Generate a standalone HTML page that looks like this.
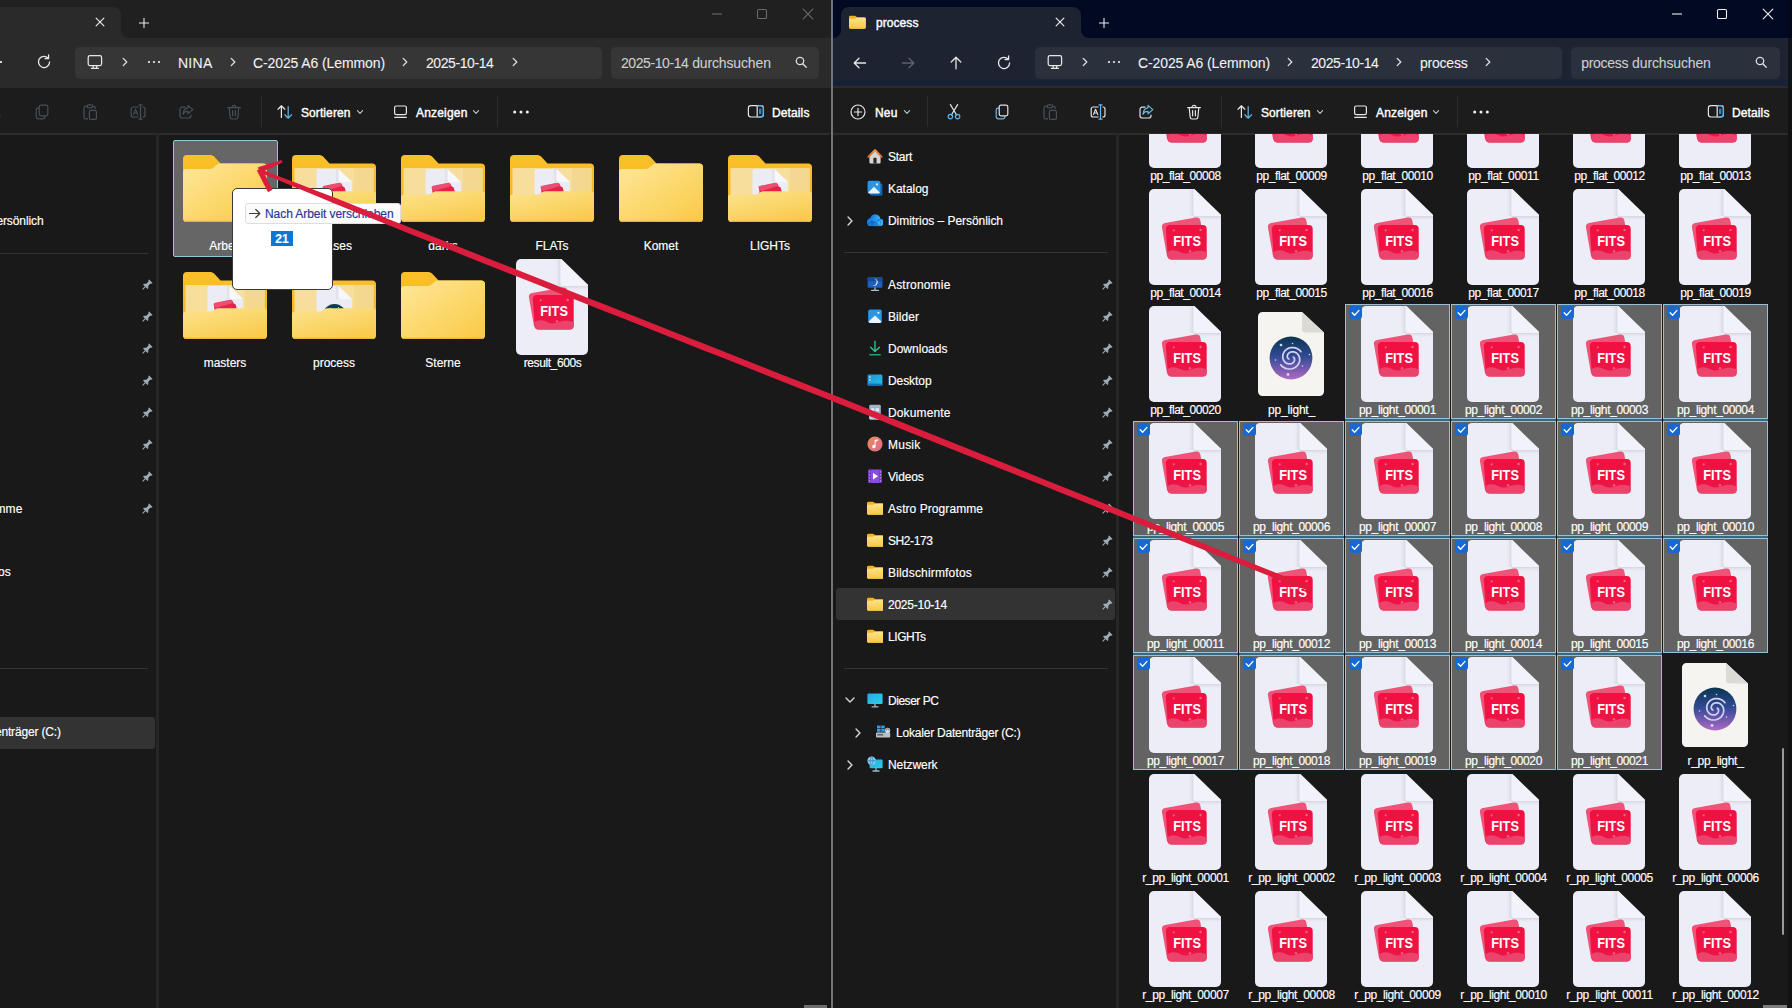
<!DOCTYPE html>
<html lang="de"><head><meta charset="utf-8"><title>Explorer</title>
<style>
html,body{margin:0;padding:0;background:#191919;}
body{width:1792px;height:1008px;position:relative;overflow:hidden;font-family:"Liberation Sans",sans-serif;}
.b{position:absolute;display:block;}
.t{position:absolute;white-space:nowrap;line-height:1;display:block;-webkit-text-stroke:0.16px currentColor;}
</style></head><body>
<svg class="b" width="0" height="0" style="left:0;top:0"><defs>
<linearGradient id="fsl" x1="0" y1="0" x2="1" y2="0"><stop offset="0" stop-color="#ecedf6" stop-opacity="0"/><stop offset="1" stop-color="#d4d5e0"/></linearGradient>
<linearGradient id="fsb" x1="0" y1="0" x2="0" y2="1"><stop offset="0" stop-color="#d4d5e0"/><stop offset="1" stop-color="#ecedf6" stop-opacity="0"/></linearGradient>
<linearGradient id="fcard" x1="0" y1="0" x2="0" y2="1"><stop offset="0" stop-color="#f21040"/><stop offset="1" stop-color="#ea1646"/></linearGradient>
<linearGradient id="sir" x1="0" y1="0" x2="0" y2="1"><stop offset="0" stop-color="#0b3550"/><stop offset="0.45" stop-color="#2f4a92"/><stop offset="0.78" stop-color="#7a5cb0"/><stop offset="1" stop-color="#b06bc4"/></linearGradient>
<linearGradient id="fold_back" x1="0" y1="0" x2="0" y2="1"><stop offset="0" stop-color="#fac02a"/><stop offset="1" stop-color="#f3b21c"/></linearGradient>
<linearGradient id="fold_front" x1="0" y1="0" x2="1" y2="1"><stop offset="0" stop-color="#fee79c"/><stop offset="0.5" stop-color="#fcd96e"/><stop offset="1" stop-color="#f9c945"/></linearGradient>
<linearGradient id="fold_flap" x1="0" y1="0" x2="0.6" y2="1"><stop offset="0" stop-color="#fde38e"/><stop offset="1" stop-color="#f9cc50"/></linearGradient>
<linearGradient id="sfold" x1="0" y1="0" x2="0" y2="1"><stop offset="0" stop-color="#ffe48a"/><stop offset="1" stop-color="#f8c648"/></linearGradient>
</defs></svg>
<div class="b" style="left:0px;top:0px;width:832px;height:38px;background:#202020;"></div>
<div class="b" style="left:0px;top:38px;width:832px;height:50px;background:#2a2a2a;"></div>
<div class="b" style="left:0px;top:88px;width:832px;height:45.5px;background:#1c1c1c;"></div>
<div class="b" style="left:0px;top:133.3px;width:832px;height:1.5px;background:#2c2c2c;"></div>
<div class="b" style="left:-10px;top:7px;width:131px;height:32px;background:#2a2a2a;border-radius:8px 8px 0 0;"></div>
<svg class="b" style="left:121px;top:30px;" width="8" height="8" viewBox="0 0 8 8"><path d="M0 8 H8 A8 8 0 0 1 0 0 z" fill="#2a2a2a"/></svg>
<svg class="b" style="left:91.5px;top:14px;" width="16" height="16" viewBox="0 0 16 16"><path d="M4.1 4.1 L11.9 11.9 M11.9 4.1 L4.1 11.9" stroke="#e9e9e9" stroke-width="1.2" stroke-linecap="round"/></svg>
<svg class="b" style="left:135.5px;top:15px;" width="16" height="16" viewBox="0 0 16 16"><path d="M3.4 8 H12.6 M8 3.4 V12.6" stroke="#e9e9e9" stroke-width="1.1" stroke-linecap="round"/></svg>
<svg class="b" style="left:711px;top:13px;" width="12" height="2" viewBox="0 0 12 2"><path d="M1 1 H11" stroke="#6a6a6a" stroke-width="1.1"/></svg>
<svg class="b" style="left:756px;top:8px;" width="12" height="12" viewBox="0 0 12 12"><rect x="1.5" y="1.5" width="9" height="9" rx="1.3" fill="none" stroke="#6a6a6a" stroke-width="1.1"/></svg>
<svg class="b" style="left:802px;top:8px;" width="12" height="12" viewBox="0 0 12 12"><path d="M1.2 1.2 L10.8 10.8 M10.8 1.2 L1.2 10.8" stroke="#6a6a6a" stroke-width="1.1" stroke-linecap="round"/></svg>
<div class="b" style="left:-6px;top:61.2px;width:8px;height:1.4px;background:#d8d8d8;"></div>
<svg class="b" style="left:35px;top:53px;" width="18" height="18" viewBox="0 0 18 18"><path d="M13.2 5.2 A5.6 5.6 0 1 0 14.6 9" fill="none" stroke="#e6e6e6" stroke-width="1.3" stroke-linecap="round"/><path d="M13.6 2 V5.6 H10" fill="none" stroke="#e6e6e6" stroke-width="1.3" stroke-linecap="round" stroke-linejoin="round"/></svg>
<div class="b" style="left:74.5px;top:46.5px;width:527.5px;height:32px;background:#363636;border-radius:5px;"></div>
<svg class="b" style="left:86px;top:52.6px;" width="18" height="18" viewBox="0 0 18 18"><rect x="2.2" y="2.6" width="13.4" height="10" rx="1.8" fill="none" stroke="#e6e6e6" stroke-width="1.25"/><path d="M5.4 15.4 H12.4 M7.2 12.8 V15.2 M10.6 12.8 V15.2" stroke="#e6e6e6" stroke-width="1.25" stroke-linecap="round" fill="none"/></svg>
<svg class="b" style="left:119px;top:54px;" width="12" height="16" viewBox="0 0 12 16"><path d="M4.2 4.4 L7.8 8 L4.2 11.6" fill="none" stroke="#e0e0e0" stroke-width="1.3" stroke-linecap="round" stroke-linejoin="round"/></svg>
<svg class="b" style="left:144px;top:58px;" width="20" height="8" viewBox="0 0 20 8"><circle cx="5" cy="4" r="1.1" fill="#efefef"/><circle cx="10" cy="4" r="1.1" fill="#efefef"/><circle cx="15" cy="4" r="1.1" fill="#efefef"/></svg>
<span class="t" style="left:178.00px;top:56.15px;font-size:14px;color:#f2f2f2;letter-spacing:0.263px;-webkit-text-stroke:0.08px currentColor;">NINA</span>
<svg class="b" style="left:226.5px;top:54px;" width="12" height="16" viewBox="0 0 12 16"><path d="M4.2 4.4 L7.8 8 L4.2 11.6" fill="none" stroke="#e0e0e0" stroke-width="1.3" stroke-linecap="round" stroke-linejoin="round"/></svg>
<span class="t" style="left:253.00px;top:56.15px;font-size:14px;color:#f2f2f2;letter-spacing:-0.103px;-webkit-text-stroke:0.08px currentColor;">C-2025 A6 (Lemmon)</span>
<svg class="b" style="left:399px;top:54px;" width="12" height="16" viewBox="0 0 12 16"><path d="M4.2 4.4 L7.8 8 L4.2 11.6" fill="none" stroke="#e0e0e0" stroke-width="1.3" stroke-linecap="round" stroke-linejoin="round"/></svg>
<span class="t" style="left:426.00px;top:56.15px;font-size:14px;color:#f2f2f2;letter-spacing:-0.412px;-webkit-text-stroke:0.08px currentColor;">2025-10-14</span>
<svg class="b" style="left:509px;top:54px;" width="12" height="16" viewBox="0 0 12 16"><path d="M4.2 4.4 L7.8 8 L4.2 11.6" fill="none" stroke="#e0e0e0" stroke-width="1.3" stroke-linecap="round" stroke-linejoin="round"/></svg>
<div class="b" style="left:610.5px;top:46.5px;width:208px;height:32px;background:#363636;border-radius:5px;"></div>
<span class="t" style="left:621.00px;top:56.15px;font-size:14px;color:#cfcfcf;letter-spacing:-0.412px;-webkit-text-stroke:0.08px currentColor;">2025-10-14</span>
<span class="t" style="left:692.20px;top:56.15px;font-size:14px;color:#cfcfcf;letter-spacing:-0.143px;-webkit-text-stroke:0.08px currentColor;">durchsuchen</span>
<svg class="b" style="left:794.3px;top:55.3px;" width="15" height="15" viewBox="0 0 15 15"><circle cx="6" cy="6" r="3.7" fill="none" stroke="#dedede" stroke-width="1.3"/><path d="M8.8 8.8 L12.2 12.2" stroke="#dedede" stroke-width="1.4" stroke-linecap="round"/></svg>
<svg class="b" style="left:-15.5px;top:103px;" width="18" height="18" viewBox="0 0 18 18"><path d="M5.4 1.6 L11.6 12 M12.6 1.6 L6.4 12" stroke="#45505a" stroke-width="1.2" stroke-linecap="round"/><circle cx="5.4" cy="13.6" r="2.2" fill="none" stroke="#45505a" stroke-width="1.2"/><circle cx="12.6" cy="13.6" r="2.2" fill="none" stroke="#45505a" stroke-width="1.2"/></svg>
<svg class="b" style="left:32.5px;top:103px;" width="18" height="18" viewBox="0 0 18 18"><path d="M6 5.2 H5 a1.8 1.8 0 0 0 -1.8 1.8 V13.6 a2.2 2.2 0 0 0 2.2 2.2 H10 a1.8 1.8 0 0 0 1.8 -1.8 V13" fill="none" stroke="#45505a" stroke-width="1.2"/><rect x="6.2" y="2.2" width="8.6" height="10.6" rx="1.8" fill="none" stroke="#45505a" stroke-width="1.2"/></svg>
<svg class="b" style="left:80.5px;top:103px;" width="18" height="18" viewBox="0 0 18 18"><path d="M6.4 3.4 H4.6 a1.6 1.6 0 0 0 -1.6 1.6 V14.2 a1.6 1.6 0 0 0 1.6 1.6 H7" fill="none" stroke="#45505a" stroke-width="1.2"/><path d="M11.6 3.4 H12.6 a1.6 1.6 0 0 1 1.6 1.6 V6" fill="none" stroke="#45505a" stroke-width="1.2"/><rect x="6.2" y="1.8" width="5.4" height="3" rx="1.2" fill="none" stroke="#45505a" stroke-width="1.2"/><rect x="8.4" y="7.4" width="7" height="9" rx="1.5" fill="none" stroke="#45505a" stroke-width="1.2"/></svg>
<svg class="b" style="left:129px;top:103px;" width="18" height="18" viewBox="0 0 18 18"><path d="M9.6 4 H4.2 a2 2 0 0 0 -2 2 V12 a2 2 0 0 0 2 2 H9.6 M13.4 4 H14 a2 2 0 0 1 2 2 V12 a2 2 0 0 1 -2 2 H13.4" fill="none" stroke="#45505a" stroke-width="1.2"/><path d="M11.5 1.8 V16.2 M10 1.8 H13 M10 16.2 H13" stroke="#45505a" stroke-width="1.2" stroke-linecap="round"/><path d="M4.4 11.6 L6.6 6.2 L8.8 11.6 M5.2 10 H8" fill="none" stroke="#45505a" stroke-width="1.1" stroke-linejoin="round" stroke-linecap="round"/></svg>
<svg class="b" style="left:177px;top:103px;" width="18" height="18" viewBox="0 0 18 18"><path d="M8 4.2 H5.2 a2.2 2.2 0 0 0 -2.2 2.2 V12.8 a2.2 2.2 0 0 0 2.2 2.2 H11.8 a2.2 2.2 0 0 0 2.2 -2.2 V12" fill="none" stroke="#45505a" stroke-width="1.2" stroke-linecap="round"/><path d="M11 2.4 L15.8 6.6 L11 10.8 V8.4 C8.6 8.2 7 9.2 6 11.2 C6.2 7.6 8 5.2 11 4.8 z" fill="none" stroke="#45505a" stroke-width="1.2" stroke-linejoin="round"/></svg>
<svg class="b" style="left:225px;top:103px;" width="18" height="18" viewBox="0 0 18 18"><path d="M2.6 4.6 H15.4 M7 4.4 a2 2 0 0 1 4 0" fill="none" stroke="#45505a" stroke-width="1.2" stroke-linecap="round"/><path d="M4.2 4.8 L5.2 14.4 a1.8 1.8 0 0 0 1.8 1.6 H11 a1.8 1.8 0 0 0 1.8 -1.6 L13.8 4.8" fill="none" stroke="#45505a" stroke-width="1.2"/><path d="M7.6 7.6 V12.8 M10.4 7.6 V12.8" stroke="#45505a" stroke-width="1.2" stroke-linecap="round"/></svg>
<div class="b" style="left:260.5px;top:96px;width:1px;height:31px;background:#2d2d2d;"></div>
<svg class="b" style="left:276px;top:103px;" width="18" height="18" viewBox="0 0 18 18"><path d="M5.4 14.4 V3 M2 6.2 L5.4 2.8 L8.8 6.2" fill="none" stroke="#e6e6e6" stroke-width="1.25" stroke-linecap="round" stroke-linejoin="round"/><path d="M12.2 3.6 V15 M8.8 11.8 L12.2 15.2 L15.6 11.8" fill="none" stroke="#5fb3e6" stroke-width="1.25" stroke-linecap="round" stroke-linejoin="round"/></svg>
<span class="t" style="left:301.00px;top:106.74px;font-size:12px;color:#fff;letter-spacing:0.090px;-webkit-text-stroke:0.4px #fff;">Sortieren</span>
<svg class="b" style="left:352px;top:106px;" width="16" height="12" viewBox="0 0 16 12"><path d="M5.4 4.7 L8 7.3 L10.6 4.7" fill="none" stroke="#c8c8c8" stroke-width="1.1" stroke-linecap="round" stroke-linejoin="round"/></svg>
<svg class="b" style="left:392px;top:103px;" width="17" height="18" viewBox="0 0 17 18"><rect x="2.6" y="3" width="11.8" height="8.6" rx="1.6" fill="none" stroke="#e6e6e6" stroke-width="1.2"/><path d="M2.8 14.4 H14.2" stroke="#e6e6e6" stroke-width="1.3" stroke-linecap="round"/></svg>
<span class="t" style="left:416.00px;top:106.74px;font-size:12px;color:#fff;letter-spacing:0.182px;-webkit-text-stroke:0.4px #fff;">Anzeigen</span>
<svg class="b" style="left:468px;top:106px;" width="16" height="12" viewBox="0 0 16 12"><path d="M5.4 4.7 L8 7.3 L10.6 4.7" fill="none" stroke="#c8c8c8" stroke-width="1.1" stroke-linecap="round" stroke-linejoin="round"/></svg>
<div class="b" style="left:497px;top:96px;width:1px;height:31px;background:#2d2d2d;"></div>
<svg class="b" style="left:510.8px;top:108px;" width="20" height="8" viewBox="0 0 20 8"><circle cx="3.7" cy="4" r="1.5" fill="#f0f0f0"/><circle cx="10" cy="4" r="1.5" fill="#f0f0f0"/><circle cx="16.3" cy="4" r="1.5" fill="#f0f0f0"/></svg>
<svg class="b" style="left:747px;top:102.6px;" width="18" height="17" viewBox="0 0 18 17"><rect x="1.4" y="2.6" width="15" height="11.4" rx="2.4" fill="none" stroke="#e6e6e6" stroke-width="1.2"/><path d="M10.2 2.6 V14" stroke="#e6e6e6" stroke-width="1.2"/><path d="M10.2 2.6 H14 a2.4 2.4 0 0 1 2.4 2.4 V11.6 a2.4 2.4 0 0 1 -2.4 2.4 H10.2" fill="none" stroke="#5fb3e6" stroke-width="1.2"/><rect x="12" y="5.4" width="2.4" height="5.8" rx="0.8" fill="#2f7fb8"/></svg>
<span class="t" style="left:772.00px;top:106.74px;font-size:12px;color:#fff;letter-spacing:0.117px;-webkit-text-stroke:0.4px #fff;">Details</span>
<div class="b" style="left:156px;top:134px;width:3px;height:874px;background:#262626;"></div>
<span class="t" style="left:-11.50px;top:214.64px;font-size:12px;color:#fff;letter-spacing:-0.103px;">Persönlich</span>
<div class="b" style="left:0px;top:252.5px;width:147.5px;height:1px;background:#333;"></div>
<svg class="b" style="left:140.5px;top:279px;" width="12" height="12" viewBox="0 0 12 12"><g transform="rotate(45 6 6)"><path d="M3.6 0.6 H8.4 V1.8 L7.4 2.4 V5.6 L9.2 7.4 V8.4 H2.8 V7.4 L4.6 5.6 V2.4 L3.6 1.8 z" fill="#a4acb8"/><path d="M6 8.4 V12.2" stroke="#a4acb8" stroke-width="1.1"/></g></svg>
<svg class="b" style="left:140.5px;top:311px;" width="12" height="12" viewBox="0 0 12 12"><g transform="rotate(45 6 6)"><path d="M3.6 0.6 H8.4 V1.8 L7.4 2.4 V5.6 L9.2 7.4 V8.4 H2.8 V7.4 L4.6 5.6 V2.4 L3.6 1.8 z" fill="#a4acb8"/><path d="M6 8.4 V12.2" stroke="#a4acb8" stroke-width="1.1"/></g></svg>
<svg class="b" style="left:140.5px;top:343px;" width="12" height="12" viewBox="0 0 12 12"><g transform="rotate(45 6 6)"><path d="M3.6 0.6 H8.4 V1.8 L7.4 2.4 V5.6 L9.2 7.4 V8.4 H2.8 V7.4 L4.6 5.6 V2.4 L3.6 1.8 z" fill="#a4acb8"/><path d="M6 8.4 V12.2" stroke="#a4acb8" stroke-width="1.1"/></g></svg>
<svg class="b" style="left:140.5px;top:375px;" width="12" height="12" viewBox="0 0 12 12"><g transform="rotate(45 6 6)"><path d="M3.6 0.6 H8.4 V1.8 L7.4 2.4 V5.6 L9.2 7.4 V8.4 H2.8 V7.4 L4.6 5.6 V2.4 L3.6 1.8 z" fill="#a4acb8"/><path d="M6 8.4 V12.2" stroke="#a4acb8" stroke-width="1.1"/></g></svg>
<svg class="b" style="left:140.5px;top:407px;" width="12" height="12" viewBox="0 0 12 12"><g transform="rotate(45 6 6)"><path d="M3.6 0.6 H8.4 V1.8 L7.4 2.4 V5.6 L9.2 7.4 V8.4 H2.8 V7.4 L4.6 5.6 V2.4 L3.6 1.8 z" fill="#a4acb8"/><path d="M6 8.4 V12.2" stroke="#a4acb8" stroke-width="1.1"/></g></svg>
<svg class="b" style="left:140.5px;top:439px;" width="12" height="12" viewBox="0 0 12 12"><g transform="rotate(45 6 6)"><path d="M3.6 0.6 H8.4 V1.8 L7.4 2.4 V5.6 L9.2 7.4 V8.4 H2.8 V7.4 L4.6 5.6 V2.4 L3.6 1.8 z" fill="#a4acb8"/><path d="M6 8.4 V12.2" stroke="#a4acb8" stroke-width="1.1"/></g></svg>
<svg class="b" style="left:140.5px;top:471px;" width="12" height="12" viewBox="0 0 12 12"><g transform="rotate(45 6 6)"><path d="M3.6 0.6 H8.4 V1.8 L7.4 2.4 V5.6 L9.2 7.4 V8.4 H2.8 V7.4 L4.6 5.6 V2.4 L3.6 1.8 z" fill="#a4acb8"/><path d="M6 8.4 V12.2" stroke="#a4acb8" stroke-width="1.1"/></g></svg>
<svg class="b" style="left:140.5px;top:503px;" width="12" height="12" viewBox="0 0 12 12"><g transform="rotate(45 6 6)"><path d="M3.6 0.6 H8.4 V1.8 L7.4 2.4 V5.6 L9.2 7.4 V8.4 H2.8 V7.4 L4.6 5.6 V2.4 L3.6 1.8 z" fill="#a4acb8"/><path d="M6 8.4 V12.2" stroke="#a4acb8" stroke-width="1.1"/></g></svg>
<span class="t" style="left:-72.60px;top:502.54px;font-size:12px;color:#fff;letter-spacing:0.065px;">Astro Programme</span>
<span class="t" style="left:-73.10px;top:566.44px;font-size:12px;color:#fff;letter-spacing:0.176px;">Bildschirmfotos</span>
<div class="b" style="left:0px;top:668px;width:147.5px;height:1px;background:#333;"></div>
<div class="b" style="left:-5px;top:717px;width:160px;height:31.5px;background:#333333;border-radius:3px;"></div>
<span class="t" style="left:-64.70px;top:726.14px;font-size:12px;color:#fff;letter-spacing:-0.162px;">Lokaler Datenträger (C:)</span>
<div class="b" style="left:173px;top:140px;width:105px;height:116.5px;background:#666666;box-sizing:border-box;border:1px solid #8fcbd9;border-radius:2px;"></div>
<svg class="b" style="left:183px;top:155px;" width="84" height="67" viewBox="0 0 84 67"><path d="M4 0 H27.5 a5 5 0 0 1 3.6 1.6 L37.5 8.6 H80 a4 4 0 0 1 4 4 V63 a4 4 0 0 1 -4 4 H4 a4 4 0 0 1 -4 -4 V4 a4 4 0 0 1 4 -4 z" fill="url(#fold_back)"/><path d="M0 17 a3 3 0 0 1 3 -3 H27 a5 5 0 0 0 3.5 -1.5 L33.5 10 a5 5 0 0 1 3.5 -1.4 H80 a4 4 0 0 1 4 4 V63 a4 4 0 0 1 -4 4 H4 a4 4 0 0 1 -4 -4 z" fill="url(#fold_front)"/><path d="M1.5 66.3 H82.5" stroke="#e9b436" stroke-width="1.2" fill="none"/></svg>
<span class="t" style="left:209.33px;top:240.24px;font-size:12px;color:#fff;">Arbeit</span>
<svg class="b" style="left:292px;top:155px;" width="84" height="67" viewBox="0 0 84 67"><path d="M4 0 H27.5 a5 5 0 0 1 3.6 1.6 L37.5 8.6 H80 a4 4 0 0 1 4 4 V63 a4 4 0 0 1 -4 4 H4 a4 4 0 0 1 -4 -4 V4 a4 4 0 0 1 4 -4 z" fill="url(#fold_back)"/><rect x="2.5" y="13" width="79" height="28" fill="#f7de9c"/><rect x="62" y="13" width="19.5" height="28" fill="#f4d890"/><path d="M26 14 H46.5 L60 27 V41 H24.5 V15.5 a1.5 1.5 0 0 1 1.5 -1.5 z" fill="#ececf5"/><path d="M46.5 14 L60 27 H49 a2.5 2.5 0 0 1 -2.5 -2.5 z" fill="#f7f7fc"/><path d="M44 14 h2.5 v13 h-2.5z" fill="#dcdce6" opacity="0.6"/><path d="M31 33.5 a2 2 0 0 1 1.6 -2.2 L47.5 28 a2 2 0 0 1 2.2 1.2 l1.2 2.6 a2 2 0 0 1 2 1.4 l1.2 4.8 H31.6 z" fill="#e8214b"/><path d="M30.5 33 a2 2 0 0 1 1.6 -2.2 L47 27.8 a2 2 0 0 1 2.2 1.2 l0.8 2 L33 36 z" fill="#ee4d72"/><path d="M0 42.5 a3 3 0 0 1 3 -3 H27 a6 6 0 0 0 3.4 -1.1 L32.4 37.2 a5 5 0 0 1 3 -1 H81 a3 3 0 0 1 3 3 V63 a4 4 0 0 1 -4 4 H4 a4 4 0 0 1 -4 -4 z" fill="url(#fold_flap)"/><path d="M1.5 66.3 H82.5" stroke="#e9b436" stroke-width="1.2" fill="none"/></svg>
<span class="t" style="left:315.99px;top:240.24px;font-size:12px;color:#fff;">Biases</span>
<svg class="b" style="left:401px;top:155px;" width="84" height="67" viewBox="0 0 84 67"><path d="M4 0 H27.5 a5 5 0 0 1 3.6 1.6 L37.5 8.6 H80 a4 4 0 0 1 4 4 V63 a4 4 0 0 1 -4 4 H4 a4 4 0 0 1 -4 -4 V4 a4 4 0 0 1 4 -4 z" fill="url(#fold_back)"/><rect x="2.5" y="13" width="79" height="28" fill="#f7de9c"/><rect x="62" y="13" width="19.5" height="28" fill="#f4d890"/><path d="M26 14 H46.5 L60 27 V41 H24.5 V15.5 a1.5 1.5 0 0 1 1.5 -1.5 z" fill="#ececf5"/><path d="M46.5 14 L60 27 H49 a2.5 2.5 0 0 1 -2.5 -2.5 z" fill="#f7f7fc"/><path d="M44 14 h2.5 v13 h-2.5z" fill="#dcdce6" opacity="0.6"/><path d="M31 33.5 a2 2 0 0 1 1.6 -2.2 L47.5 28 a2 2 0 0 1 2.2 1.2 l1.2 2.6 a2 2 0 0 1 2 1.4 l1.2 4.8 H31.6 z" fill="#e8214b"/><path d="M30.5 33 a2 2 0 0 1 1.6 -2.2 L47 27.8 a2 2 0 0 1 2.2 1.2 l0.8 2 L33 36 z" fill="#ee4d72"/><path d="M0 42.5 a3 3 0 0 1 3 -3 H27 a6 6 0 0 0 3.4 -1.1 L32.4 37.2 a5 5 0 0 1 3 -1 H81 a3 3 0 0 1 3 3 V63 a4 4 0 0 1 -4 4 H4 a4 4 0 0 1 -4 -4 z" fill="url(#fold_flap)"/><path d="M1.5 66.3 H82.5" stroke="#e9b436" stroke-width="1.2" fill="none"/></svg>
<span class="t" style="left:428.33px;top:240.24px;font-size:12px;color:#fff;">darks</span>
<svg class="b" style="left:510px;top:155px;" width="84" height="67" viewBox="0 0 84 67"><path d="M4 0 H27.5 a5 5 0 0 1 3.6 1.6 L37.5 8.6 H80 a4 4 0 0 1 4 4 V63 a4 4 0 0 1 -4 4 H4 a4 4 0 0 1 -4 -4 V4 a4 4 0 0 1 4 -4 z" fill="url(#fold_back)"/><rect x="2.5" y="13" width="79" height="28" fill="#f7de9c"/><rect x="62" y="13" width="19.5" height="28" fill="#f4d890"/><path d="M26 14 H46.5 L60 27 V41 H24.5 V15.5 a1.5 1.5 0 0 1 1.5 -1.5 z" fill="#ececf5"/><path d="M46.5 14 L60 27 H49 a2.5 2.5 0 0 1 -2.5 -2.5 z" fill="#f7f7fc"/><path d="M44 14 h2.5 v13 h-2.5z" fill="#dcdce6" opacity="0.6"/><path d="M31 33.5 a2 2 0 0 1 1.6 -2.2 L47.5 28 a2 2 0 0 1 2.2 1.2 l1.2 2.6 a2 2 0 0 1 2 1.4 l1.2 4.8 H31.6 z" fill="#e8214b"/><path d="M30.5 33 a2 2 0 0 1 1.6 -2.2 L47 27.8 a2 2 0 0 1 2.2 1.2 l0.8 2 L33 36 z" fill="#ee4d72"/><path d="M0 42.5 a3 3 0 0 1 3 -3 H27 a6 6 0 0 0 3.4 -1.1 L32.4 37.2 a5 5 0 0 1 3 -1 H81 a3 3 0 0 1 3 3 V63 a4 4 0 0 1 -4 4 H4 a4 4 0 0 1 -4 -4 z" fill="url(#fold_flap)"/><path d="M1.5 66.3 H82.5" stroke="#e9b436" stroke-width="1.2" fill="none"/></svg>
<span class="t" style="left:535.44px;top:240.24px;font-size:12px;color:#fff;">FLATs</span>
<svg class="b" style="left:619px;top:155px;" width="84" height="67" viewBox="0 0 84 67"><path d="M4 0 H27.5 a5 5 0 0 1 3.6 1.6 L37.5 8.6 H80 a4 4 0 0 1 4 4 V63 a4 4 0 0 1 -4 4 H4 a4 4 0 0 1 -4 -4 V4 a4 4 0 0 1 4 -4 z" fill="url(#fold_back)"/><path d="M0 17 a3 3 0 0 1 3 -3 H27 a5 5 0 0 0 3.5 -1.5 L33.5 10 a5 5 0 0 1 3.5 -1.4 H80 a4 4 0 0 1 4 4 V63 a4 4 0 0 1 -4 4 H4 a4 4 0 0 1 -4 -4 z" fill="url(#fold_front)"/><path d="M1.5 66.3 H82.5" stroke="#e9b436" stroke-width="1.2" fill="none"/></svg>
<span class="t" style="left:643.66px;top:240.24px;font-size:12px;color:#fff;">Komet</span>
<svg class="b" style="left:728px;top:155px;" width="84" height="67" viewBox="0 0 84 67"><path d="M4 0 H27.5 a5 5 0 0 1 3.6 1.6 L37.5 8.6 H80 a4 4 0 0 1 4 4 V63 a4 4 0 0 1 -4 4 H4 a4 4 0 0 1 -4 -4 V4 a4 4 0 0 1 4 -4 z" fill="url(#fold_back)"/><rect x="2.5" y="13" width="79" height="28" fill="#f7de9c"/><rect x="62" y="13" width="19.5" height="28" fill="#f4d890"/><path d="M26 14 H46.5 L60 27 V41 H24.5 V15.5 a1.5 1.5 0 0 1 1.5 -1.5 z" fill="#ececf5"/><path d="M46.5 14 L60 27 H49 a2.5 2.5 0 0 1 -2.5 -2.5 z" fill="#f7f7fc"/><path d="M44 14 h2.5 v13 h-2.5z" fill="#dcdce6" opacity="0.6"/><path d="M31 33.5 a2 2 0 0 1 1.6 -2.2 L47.5 28 a2 2 0 0 1 2.2 1.2 l1.2 2.6 a2 2 0 0 1 2 1.4 l1.2 4.8 H31.6 z" fill="#e8214b"/><path d="M30.5 33 a2 2 0 0 1 1.6 -2.2 L47 27.8 a2 2 0 0 1 2.2 1.2 l0.8 2 L33 36 z" fill="#ee4d72"/><path d="M0 42.5 a3 3 0 0 1 3 -3 H27 a6 6 0 0 0 3.4 -1.1 L32.4 37.2 a5 5 0 0 1 3 -1 H81 a3 3 0 0 1 3 3 V63 a4 4 0 0 1 -4 4 H4 a4 4 0 0 1 -4 -4 z" fill="url(#fold_flap)"/><path d="M1.5 66.3 H82.5" stroke="#e9b436" stroke-width="1.2" fill="none"/></svg>
<span class="t" style="left:750.00px;top:240.24px;font-size:12px;color:#fff;">LIGHTs</span>
<svg class="b" style="left:183px;top:272px;" width="84" height="67" viewBox="0 0 84 67"><path d="M4 0 H27.5 a5 5 0 0 1 3.6 1.6 L37.5 8.6 H80 a4 4 0 0 1 4 4 V63 a4 4 0 0 1 -4 4 H4 a4 4 0 0 1 -4 -4 V4 a4 4 0 0 1 4 -4 z" fill="url(#fold_back)"/><rect x="2.5" y="13" width="79" height="28" fill="#f7de9c"/><rect x="62" y="13" width="19.5" height="28" fill="#f4d890"/><path d="M26 14 H46.5 L60 27 V41 H24.5 V15.5 a1.5 1.5 0 0 1 1.5 -1.5 z" fill="#ececf5"/><path d="M46.5 14 L60 27 H49 a2.5 2.5 0 0 1 -2.5 -2.5 z" fill="#f7f7fc"/><path d="M44 14 h2.5 v13 h-2.5z" fill="#dcdce6" opacity="0.6"/><path d="M31 33.5 a2 2 0 0 1 1.6 -2.2 L47.5 28 a2 2 0 0 1 2.2 1.2 l1.2 2.6 a2 2 0 0 1 2 1.4 l1.2 4.8 H31.6 z" fill="#e8214b"/><path d="M30.5 33 a2 2 0 0 1 1.6 -2.2 L47 27.8 a2 2 0 0 1 2.2 1.2 l0.8 2 L33 36 z" fill="#ee4d72"/><path d="M0 42.5 a3 3 0 0 1 3 -3 H27 a6 6 0 0 0 3.4 -1.1 L32.4 37.2 a5 5 0 0 1 3 -1 H81 a3 3 0 0 1 3 3 V63 a4 4 0 0 1 -4 4 H4 a4 4 0 0 1 -4 -4 z" fill="url(#fold_flap)"/><path d="M1.5 66.3 H82.5" stroke="#e9b436" stroke-width="1.2" fill="none"/></svg>
<span class="t" style="left:203.66px;top:357.24px;font-size:12px;color:#fff;">masters</span>
<svg class="b" style="left:292px;top:272px;" width="84" height="67" viewBox="0 0 84 67"><path d="M4 0 H27.5 a5 5 0 0 1 3.6 1.6 L37.5 8.6 H80 a4 4 0 0 1 4 4 V63 a4 4 0 0 1 -4 4 H4 a4 4 0 0 1 -4 -4 V4 a4 4 0 0 1 4 -4 z" fill="url(#fold_back)"/><rect x="2.5" y="13" width="79" height="28" fill="#f7de9c"/><rect x="62" y="13" width="19.5" height="28" fill="#f4d890"/><path d="M26 14 H46.5 L60 27 V41 H24.5 V15.5 a1.5 1.5 0 0 1 1.5 -1.5 z" fill="#ececf5"/><path d="M46.5 14 L60 27 H49 a2.5 2.5 0 0 1 -2.5 -2.5 z" fill="#f7f7fc"/><path d="M44 14 h2.5 v13 h-2.5z" fill="#dcdce6" opacity="0.6"/><circle cx="42.5" cy="43.5" r="11.5" fill="#0d3b55"/><circle cx="38.5" cy="36.5" r="0.8" fill="#cfd6fb"/><circle cx="46.5" cy="35.5" r="0.6" fill="#cfd6fb"/><path d="M0 42.5 a3 3 0 0 1 3 -3 H27 a6 6 0 0 0 3.4 -1.1 L32.4 37.2 a5 5 0 0 1 3 -1 H81 a3 3 0 0 1 3 3 V63 a4 4 0 0 1 -4 4 H4 a4 4 0 0 1 -4 -4 z" fill="url(#fold_flap)"/><path d="M1.5 66.3 H82.5" stroke="#e9b436" stroke-width="1.2" fill="none"/></svg>
<span class="t" style="left:312.99px;top:357.24px;font-size:12px;color:#fff;">process</span>
<svg class="b" style="left:401px;top:272px;" width="84" height="67" viewBox="0 0 84 67"><path d="M4 0 H27.5 a5 5 0 0 1 3.6 1.6 L37.5 8.6 H80 a4 4 0 0 1 4 4 V63 a4 4 0 0 1 -4 4 H4 a4 4 0 0 1 -4 -4 V4 a4 4 0 0 1 4 -4 z" fill="url(#fold_back)"/><path d="M0 17 a3 3 0 0 1 3 -3 H27 a5 5 0 0 0 3.5 -1.5 L33.5 10 a5 5 0 0 1 3.5 -1.4 H80 a4 4 0 0 1 4 4 V63 a4 4 0 0 1 -4 4 H4 a4 4 0 0 1 -4 -4 z" fill="url(#fold_front)"/><path d="M1.5 66.3 H82.5" stroke="#e9b436" stroke-width="1.2" fill="none"/></svg>
<span class="t" style="left:425.32px;top:357.24px;font-size:12px;color:#fff;">Sterne</span>
<svg class="b" style="left:516px;top:259.4px;" width="72" height="96" viewBox="0 0 72 96"><path d="M5 0 H44.6 L72 26.6 V91 a5 5 0 0 1 -5 5 H5 a5 5 0 0 1 -5 -5 V5 a5 5 0 0 1 5 -5 z" fill="#ecedf6"/><rect x="38.5" y="0" width="6" height="27" fill="url(#fsl)"/><rect x="44.5" y="27" width="27.5" height="5" fill="url(#fsb)"/><path d="M44.5 0 H45.5 L72 25.8 V27 H48.5 a4 4 0 0 1 -4 -4 z" fill="#f2f2fa"/><g transform="translate(0 0) scale(1)"><rect x="15.2" y="31" width="39" height="36" rx="4" fill="#ef5378" transform="rotate(-10 34.5 49.5)"/><path d="M20.7 36 H53.7 a4 4 0 0 1 4 4 V66.5 a4 4 0 0 1 -4 4 H22.7 a4 4 0 0 1 -4 -4 L16.8 40.1 a3.8 3.8 0 0 1 3.9 -4.1 z" fill="url(#fcard)"/><path d="M18.5 63 C23 60.5 27 61 32 63.6 C37 66 42 63 47 62 C51 61.3 54.5 62 57.7 63.5 V66.5 a4 4 0 0 1 -4 4 H22.7 a4 4 0 0 1 -4 -4 z" fill="#ec436c"/><circle cx="24.7" cy="41.3" r="1.1" fill="#f55f83"/><circle cx="51.6" cy="41" r="1.3" fill="#f55f83"/><circle cx="41" cy="62.3" r="1.2" fill="#f45c80"/><text x="38.1" y="57.2" font-family="Liberation Sans, sans-serif" font-weight="700" font-size="14.6" fill="#fff" text-anchor="middle" textLength="27.6" lengthAdjust="spacingAndGlyphs">FITS</text></g></svg>
<span class="t" style="left:523.75px;top:357.24px;font-size:12px;color:#fff;letter-spacing:-0.413px;">result_600s</span>
<div class="b" style="left:803.5px;top:1005px;width:23.5px;height:3px;background:#6e6e6e;"></div>
<div class="b" style="left:833px;top:0px;width:959px;height:38px;background:#020922;"></div>
<div class="b" style="left:833px;top:38px;width:959px;height:50px;background:#1d2330;"></div>
<div class="b" style="left:833px;top:88px;width:959px;height:45.5px;background:#1c1c1c;"></div>
<div class="b" style="left:833px;top:80px;width:959px;height:6px;background:#182036;"></div>
<div class="b" style="left:833px;top:86px;width:959px;height:2px;background:#2b2b2b;"></div>
<div class="b" style="left:833px;top:133.3px;width:959px;height:1.5px;background:#2c2c2c;"></div>
<div class="b" style="left:841px;top:7px;width:239.5px;height:32px;background:#1d2330;border-radius:8px 8px 0 0;"></div>
<svg class="b" style="left:833px;top:30px;" width="8" height="8" viewBox="0 0 8 8"><path d="M8 8 H0 A8 8 0 0 0 8 0 z" fill="#1d2330"/></svg>
<svg class="b" style="left:1080.5px;top:30px;" width="8" height="8" viewBox="0 0 8 8"><path d="M0 8 H8 A8 8 0 0 1 0 0 z" fill="#1d2330"/></svg>
<svg class="b" style="left:849.1px;top:15px;" width="16.8" height="14.5" viewBox="0 0 17.5 14.5"><path d="M1.5 0.5 H6.2 a1.5 1.5 0 0 1 1.1 0.5 L8.6 2.3 H16 a1.5 1.5 0 0 1 1.5 1.5 V12.5 a1.5 1.5 0 0 1 -1.5 1.5 H1.5 a1.5 1.5 0 0 1 -1.5 -1.5 V2 a1.5 1.5 0 0 1 1.5 -1.5 z" fill="#f2b11f"/><path d="M0 4.6 a1 1 0 0 1 1 -1 H6 a1.6 1.6 0 0 0 1.1 -0.45 L7.8 2.6 a1.2 1.2 0 0 1 0.9 -0.3 H16 a1.5 1.5 0 0 1 1.5 1.5 V12.5 a1.5 1.5 0 0 1 -1.5 1.5 H1.5 a1.5 1.5 0 0 1 -1.5 -1.5 z" fill="url(#sfold)"/></svg>
<span class="t" style="left:876.00px;top:17.44px;font-size:12px;color:#fff;letter-spacing:0.069px;-webkit-text-stroke:0.4px #fff;">process</span>
<svg class="b" style="left:1051.5px;top:14px;" width="16" height="16" viewBox="0 0 16 16"><path d="M4.1 4.1 L11.9 11.9 M11.9 4.1 L4.1 11.9" stroke="#e9e9e9" stroke-width="1.2" stroke-linecap="round"/></svg>
<svg class="b" style="left:1095.5px;top:15px;" width="16" height="16" viewBox="0 0 16 16"><path d="M3.4 8 H12.6 M8 3.4 V12.6" stroke="#e9e9e9" stroke-width="1.1" stroke-linecap="round"/></svg>
<svg class="b" style="left:1671px;top:13px;" width="12" height="2" viewBox="0 0 12 2"><path d="M1 1 H11" stroke="#f0f0f0" stroke-width="1.1"/></svg>
<svg class="b" style="left:1716px;top:8px;" width="12" height="12" viewBox="0 0 12 12"><rect x="1.5" y="1.5" width="9" height="9" rx="1.3" fill="none" stroke="#f0f0f0" stroke-width="1.1"/></svg>
<svg class="b" style="left:1762px;top:8px;" width="12" height="12" viewBox="0 0 12 12"><path d="M1.2 1.2 L10.8 10.8 M10.8 1.2 L1.2 10.8" stroke="#f0f0f0" stroke-width="1.1" stroke-linecap="round"/></svg>
<svg class="b" style="left:851px;top:53.5px;" width="18" height="18" viewBox="0 0 18 18"><path d="M14.6 9 H3.4 M8 4.2 L3.2 9 L8 13.8" fill="none" stroke="#e6e6e6" stroke-width="1.3" stroke-linecap="round" stroke-linejoin="round"/></svg>
<svg class="b" style="left:899px;top:53.5px;" width="18" height="18" viewBox="0 0 18 18"><path d="M3.4 9 H14.6 M10 4.2 L14.8 9 L10 13.8" fill="none" stroke="#5d626a" stroke-width="1.3" stroke-linecap="round" stroke-linejoin="round"/></svg>
<svg class="b" style="left:947px;top:53.5px;" width="18" height="18" viewBox="0 0 18 18"><path d="M9 14.8 V3.4 M4.2 8 L9 3.2 L13.8 8" fill="none" stroke="#e6e6e6" stroke-width="1.3" stroke-linecap="round" stroke-linejoin="round"/></svg>
<svg class="b" style="left:995px;top:53.5px;" width="18" height="18" viewBox="0 0 18 18"><path d="M13.2 5.2 A5.6 5.6 0 1 0 14.6 9" fill="none" stroke="#e6e6e6" stroke-width="1.3" stroke-linecap="round"/><path d="M13.6 2 V5.6 H10" fill="none" stroke="#e6e6e6" stroke-width="1.3" stroke-linecap="round" stroke-linejoin="round"/></svg>
<div class="b" style="left:1034.5px;top:46.5px;width:527.5px;height:32px;background:#2a303c;border-radius:5px;"></div>
<svg class="b" style="left:1046px;top:52.6px;" width="18" height="18" viewBox="0 0 18 18"><rect x="2.2" y="2.6" width="13.4" height="10" rx="1.8" fill="none" stroke="#e6e6e6" stroke-width="1.25"/><path d="M5.4 15.4 H12.4 M7.2 12.8 V15.2 M10.6 12.8 V15.2" stroke="#e6e6e6" stroke-width="1.25" stroke-linecap="round" fill="none"/></svg>
<svg class="b" style="left:1079px;top:54px;" width="12" height="16" viewBox="0 0 12 16"><path d="M4.2 4.4 L7.8 8 L4.2 11.6" fill="none" stroke="#e0e0e0" stroke-width="1.3" stroke-linecap="round" stroke-linejoin="round"/></svg>
<svg class="b" style="left:1104px;top:58px;" width="20" height="8" viewBox="0 0 20 8"><circle cx="5" cy="4" r="1.1" fill="#efefef"/><circle cx="10" cy="4" r="1.1" fill="#efefef"/><circle cx="15" cy="4" r="1.1" fill="#efefef"/></svg>
<span class="t" style="left:1138.00px;top:56.15px;font-size:14px;color:#f2f2f2;letter-spacing:-0.103px;-webkit-text-stroke:0.08px currentColor;">C-2025 A6 (Lemmon)</span>
<svg class="b" style="left:1284px;top:54px;" width="12" height="16" viewBox="0 0 12 16"><path d="M4.2 4.4 L7.8 8 L4.2 11.6" fill="none" stroke="#e0e0e0" stroke-width="1.3" stroke-linecap="round" stroke-linejoin="round"/></svg>
<span class="t" style="left:1311.00px;top:56.15px;font-size:14px;color:#f2f2f2;letter-spacing:-0.412px;-webkit-text-stroke:0.08px currentColor;">2025-10-14</span>
<svg class="b" style="left:1393px;top:54px;" width="12" height="16" viewBox="0 0 12 16"><path d="M4.2 4.4 L7.8 8 L4.2 11.6" fill="none" stroke="#e0e0e0" stroke-width="1.3" stroke-linecap="round" stroke-linejoin="round"/></svg>
<span class="t" style="left:1420.00px;top:56.15px;font-size:14px;color:#f2f2f2;letter-spacing:-0.217px;-webkit-text-stroke:0.08px currentColor;">process</span>
<svg class="b" style="left:1482px;top:54px;" width="12" height="16" viewBox="0 0 12 16"><path d="M4.2 4.4 L7.8 8 L4.2 11.6" fill="none" stroke="#e0e0e0" stroke-width="1.3" stroke-linecap="round" stroke-linejoin="round"/></svg>
<div class="b" style="left:1570.5px;top:46.5px;width:209.5px;height:32px;background:#2a303c;border-radius:5px;"></div>
<span class="t" style="left:1581.30px;top:56.15px;font-size:14px;color:#cfcfcf;letter-spacing:-0.317px;-webkit-text-stroke:0.08px currentColor;">process</span>
<span class="t" style="left:1632.10px;top:56.15px;font-size:14px;color:#cfcfcf;letter-spacing:-0.143px;-webkit-text-stroke:0.08px currentColor;">durchsuchen</span>
<svg class="b" style="left:1754.3px;top:55.3px;" width="15" height="15" viewBox="0 0 15 15"><circle cx="6" cy="6" r="3.7" fill="none" stroke="#dedede" stroke-width="1.3"/><path d="M8.8 8.8 L12.2 12.2" stroke="#dedede" stroke-width="1.4" stroke-linecap="round"/></svg>
<svg class="b" style="left:849px;top:103px;" width="18" height="18" viewBox="0 0 18 18"><circle cx="9" cy="9" r="7" fill="none" stroke="#e6e6e6" stroke-width="1.2"/><path d="M9 5.4 V12.6 M5.4 9 H12.6" stroke="#e6e6e6" stroke-width="1.2" stroke-linecap="round"/></svg>
<span class="t" style="left:875.00px;top:106.74px;font-size:12px;color:#fff;letter-spacing:0.162px;-webkit-text-stroke:0.4px #fff;">Neu</span>
<svg class="b" style="left:899px;top:106px;" width="16" height="12" viewBox="0 0 16 12"><path d="M5.4 4.7 L8 7.3 L10.6 4.7" fill="none" stroke="#c8c8c8" stroke-width="1.1" stroke-linecap="round" stroke-linejoin="round"/></svg>
<div class="b" style="left:927px;top:96px;width:1px;height:31px;background:#2d2d2d;"></div>
<svg class="b" style="left:944.5px;top:103px;" width="18" height="18" viewBox="0 0 18 18"><path d="M5.4 1.6 L11.6 12 M12.6 1.6 L6.4 12" stroke="#dfe3e8" stroke-width="1.2" stroke-linecap="round"/><circle cx="5.4" cy="13.6" r="2.2" fill="none" stroke="#5fb3e6" stroke-width="1.2"/><circle cx="12.6" cy="13.6" r="2.2" fill="none" stroke="#5fb3e6" stroke-width="1.2"/></svg>
<svg class="b" style="left:992.5px;top:103px;" width="18" height="18" viewBox="0 0 18 18"><path d="M6 5.2 H5 a1.8 1.8 0 0 0 -1.8 1.8 V13.6 a2.2 2.2 0 0 0 2.2 2.2 H10 a1.8 1.8 0 0 0 1.8 -1.8 V13" fill="none" stroke="#6fb6e2" stroke-width="1.2"/><rect x="6.2" y="2.2" width="8.6" height="10.6" rx="1.8" fill="none" stroke="#dfe3e8" stroke-width="1.2"/></svg>
<svg class="b" style="left:1040.5px;top:103px;" width="18" height="18" viewBox="0 0 18 18"><path d="M6.4 3.4 H4.6 a1.6 1.6 0 0 0 -1.6 1.6 V14.2 a1.6 1.6 0 0 0 1.6 1.6 H7" fill="none" stroke="#45505a" stroke-width="1.2"/><path d="M11.6 3.4 H12.6 a1.6 1.6 0 0 1 1.6 1.6 V6" fill="none" stroke="#45505a" stroke-width="1.2"/><rect x="6.2" y="1.8" width="5.4" height="3" rx="1.2" fill="none" stroke="#45505a" stroke-width="1.2"/><rect x="8.4" y="7.4" width="7" height="9" rx="1.5" fill="none" stroke="#45505a" stroke-width="1.2"/></svg>
<svg class="b" style="left:1088.5px;top:103px;" width="18" height="18" viewBox="0 0 18 18"><path d="M9.6 4 H4.2 a2 2 0 0 0 -2 2 V12 a2 2 0 0 0 2 2 H9.6 M13.4 4 H14 a2 2 0 0 1 2 2 V12 a2 2 0 0 1 -2 2 H13.4" fill="none" stroke="#dfe3e8" stroke-width="1.2"/><path d="M11.5 1.8 V16.2 M10 1.8 H13 M10 16.2 H13" stroke="#6fb6e2" stroke-width="1.2" stroke-linecap="round"/><path d="M4.4 11.6 L6.6 6.2 L8.8 11.6 M5.2 10 H8" fill="none" stroke="#dfe3e8" stroke-width="1.1" stroke-linejoin="round" stroke-linecap="round"/></svg>
<svg class="b" style="left:1136.5px;top:103px;" width="18" height="18" viewBox="0 0 18 18"><path d="M8 4.2 H5.2 a2.2 2.2 0 0 0 -2.2 2.2 V12.8 a2.2 2.2 0 0 0 2.2 2.2 H11.8 a2.2 2.2 0 0 0 2.2 -2.2 V12" fill="none" stroke="#dfe3e8" stroke-width="1.2" stroke-linecap="round"/><path d="M11 2.4 L15.8 6.6 L11 10.8 V8.4 C8.6 8.2 7 9.2 6 11.2 C6.2 7.6 8 5.2 11 4.8 z" fill="none" stroke="#6fb6e2" stroke-width="1.2" stroke-linejoin="round"/></svg>
<svg class="b" style="left:1184.5px;top:103px;" width="18" height="18" viewBox="0 0 18 18"><path d="M2.6 4.6 H15.4 M7 4.4 a2 2 0 0 1 4 0" fill="none" stroke="#dfe3e8" stroke-width="1.2" stroke-linecap="round"/><path d="M4.2 4.8 L5.2 14.4 a1.8 1.8 0 0 0 1.8 1.6 H11 a1.8 1.8 0 0 0 1.8 -1.6 L13.8 4.8" fill="none" stroke="#dfe3e8" stroke-width="1.2"/><path d="M7.6 7.6 V12.8 M10.4 7.6 V12.8" stroke="#dfe3e8" stroke-width="1.2" stroke-linecap="round"/></svg>
<div class="b" style="left:1220.5px;top:96px;width:1px;height:31px;background:#2d2d2d;"></div>
<svg class="b" style="left:1236px;top:103px;" width="18" height="18" viewBox="0 0 18 18"><path d="M5.4 14.4 V3 M2 6.2 L5.4 2.8 L8.8 6.2" fill="none" stroke="#e6e6e6" stroke-width="1.25" stroke-linecap="round" stroke-linejoin="round"/><path d="M12.2 3.6 V15 M8.8 11.8 L12.2 15.2 L15.6 11.8" fill="none" stroke="#5fb3e6" stroke-width="1.25" stroke-linecap="round" stroke-linejoin="round"/></svg>
<span class="t" style="left:1261.00px;top:106.74px;font-size:12px;color:#fff;letter-spacing:0.090px;-webkit-text-stroke:0.4px #fff;">Sortieren</span>
<svg class="b" style="left:1312px;top:106px;" width="16" height="12" viewBox="0 0 16 12"><path d="M5.4 4.7 L8 7.3 L10.6 4.7" fill="none" stroke="#c8c8c8" stroke-width="1.1" stroke-linecap="round" stroke-linejoin="round"/></svg>
<svg class="b" style="left:1352px;top:103px;" width="17" height="18" viewBox="0 0 17 18"><rect x="2.6" y="3" width="11.8" height="8.6" rx="1.6" fill="none" stroke="#e6e6e6" stroke-width="1.2"/><path d="M2.8 14.4 H14.2" stroke="#e6e6e6" stroke-width="1.3" stroke-linecap="round"/></svg>
<span class="t" style="left:1376.00px;top:106.74px;font-size:12px;color:#fff;letter-spacing:0.182px;-webkit-text-stroke:0.4px #fff;">Anzeigen</span>
<svg class="b" style="left:1428px;top:106px;" width="16" height="12" viewBox="0 0 16 12"><path d="M5.4 4.7 L8 7.3 L10.6 4.7" fill="none" stroke="#c8c8c8" stroke-width="1.1" stroke-linecap="round" stroke-linejoin="round"/></svg>
<div class="b" style="left:1457px;top:96px;width:1px;height:31px;background:#2d2d2d;"></div>
<svg class="b" style="left:1470.8px;top:108px;" width="20" height="8" viewBox="0 0 20 8"><circle cx="3.7" cy="4" r="1.5" fill="#f0f0f0"/><circle cx="10" cy="4" r="1.5" fill="#f0f0f0"/><circle cx="16.3" cy="4" r="1.5" fill="#f0f0f0"/></svg>
<svg class="b" style="left:1707px;top:102.6px;" width="18" height="17" viewBox="0 0 18 17"><rect x="1.4" y="2.6" width="15" height="11.4" rx="2.4" fill="none" stroke="#e6e6e6" stroke-width="1.2"/><path d="M10.2 2.6 V14" stroke="#e6e6e6" stroke-width="1.2"/><path d="M10.2 2.6 H14 a2.4 2.4 0 0 1 2.4 2.4 V11.6 a2.4 2.4 0 0 1 -2.4 2.4 H10.2" fill="none" stroke="#5fb3e6" stroke-width="1.2"/><rect x="12" y="5.4" width="2.4" height="5.8" rx="0.8" fill="#2f7fb8"/></svg>
<span class="t" style="left:1732.00px;top:106.74px;font-size:12px;color:#fff;letter-spacing:0.117px;-webkit-text-stroke:0.4px #fff;">Details</span>
<div class="b" style="left:828.5px;top:134px;width:2.5px;height:874px;background:#151515;"></div>
<div class="b" style="left:831px;top:0px;width:2.2px;height:1008px;background:#747474;"></div>
<div class="b" style="left:831px;top:0px;width:2.2px;height:88px;background:#6e7380;"></div>
<div class="b" style="left:1788px;top:0px;width:4px;height:1008px;background:#121212;"></div>
<div class="b" style="left:1788px;top:0px;width:4px;height:38px;background:#040816;"></div>
<div class="b" style="left:1788px;top:38px;width:4px;height:50px;background:#10141a;"></div>
<div class="b" style="left:1116px;top:134px;width:3px;height:874px;background:#262626;"></div>
<svg class="b" style="left:867px;top:148px;" width="16" height="16" viewBox="0 0 16 16"><defs><linearGradient id="hm" x1="0" y1="0" x2="0" y2="1"><stop offset="0" stop-color="#f7a24a"/><stop offset="1" stop-color="#d8642a"/></linearGradient></defs><path d="M2.4 8 V14.2 a1.2 1.2 0 0 0 1.2 1.2 H12.4 a1.2 1.2 0 0 0 1.2 -1.2 V8 L8 3 z" fill="#d6d6d6"/><path d="M6.4 15.4 V10.6 a0.8 0.8 0 0 1 0.8 -0.8 h1.6 a0.8 0.8 0 0 1 0.8 0.8 V15.4 z" fill="#2a2a2a"/><path d="M0.6 8.2 L7.2 1.6 a1.2 1.2 0 0 1 1.6 0 L15.4 8.2 a0.9 0.9 0 0 1 -1.3 1.3 L8 3.6 L1.9 9.5 a0.9 0.9 0 0 1 -1.3 -1.3 z" fill="url(#hm)"/></svg>
<span class="t" style="left:888.00px;top:150.84px;font-size:12px;color:#fff;letter-spacing:-0.269px;">Start</span>
<svg class="b" style="left:867px;top:180px;" width="16" height="16" viewBox="0 0 16 16"><rect x="3" y="3.4" width="12.4" height="12.4" rx="1.6" fill="#1a5fa8"/><rect x="0.6" y="0.8" width="12.8" height="12.8" rx="1.8" fill="#2b95e4"/><path d="M1.2 12.6 L7 6.8 L12.8 12.6 a1.6 1.6 0 0 1 -1.2 1 H2.4 a1.6 1.6 0 0 1 -1.2 -1 z" fill="#eaf5ff"/><circle cx="10" cy="4.4" r="1.1" fill="#eaf5ff"/></svg>
<span class="t" style="left:888.00px;top:182.84px;font-size:12px;color:#fff;letter-spacing:-0.029px;">Katalog</span>
<svg class="b" style="left:843.5px;top:212.5px;" width="12" height="16" viewBox="0 0 12 16"><path d="M4.05 4.1 L7.95 8 L4.05 11.9" fill="none" stroke="#d8d8d8" stroke-width="1.4" stroke-linecap="round" stroke-linejoin="round"/></svg>
<svg class="b" style="left:867px;top:212px;" width="16" height="16" viewBox="0 0 16 16"><defs><linearGradient id="cl" x1="0" y1="0" x2="1" y2="0.4"><stop offset="0" stop-color="#0f6bd8"/><stop offset="0.55" stop-color="#2196f0"/><stop offset="1" stop-color="#3fb8f6"/></linearGradient></defs><g fill="url(#cl)"><circle cx="3.9" cy="10.2" r="3.9"/><circle cx="8.2" cy="7.4" r="5.2"/><circle cx="12.9" cy="10.4" r="3.7"/><rect x="3.9" y="9" width="9" height="5.1"/></g><path d="M0.4 11.6 C3 8.6 7 8.4 9.6 10.6 L13.4 14.1 H3.9 a3.9 3.9 0 0 1 -3.5 -2.5 z" fill="#0d5fc6" opacity="0.55"/></svg>
<span class="t" style="left:888.00px;top:214.84px;font-size:12px;color:#fff;letter-spacing:-0.047px;">Dimitrios – Persönlich</span>
<div class="b" style="left:844px;top:252px;width:263.5px;height:1px;background:#333;"></div>
<svg class="b" style="left:867px;top:276px;" width="16" height="16" viewBox="0 0 16 16"><rect x="0.6" y="1.2" width="14.8" height="10.6" rx="1.2" fill="#1d5fc0"/><rect x="0.6" y="1.2" width="14.8" height="4" rx="1.2" fill="#174a9a"/><path d="M7 2.6 a3.7 3.7 0 1 1 -2 6.8 a3.1 3.1 0 0 0 2 -6.8 z" fill="#eef3ff"/><path d="M8 11.8 V14 M4.6 14.4 H11.4" stroke="#9fc3ee" stroke-width="1.3" stroke-linecap="round"/></svg>
<span class="t" style="left:888.00px;top:278.84px;font-size:12px;color:#fff;letter-spacing:0.181px;">Astronomie</span>
<svg class="b" style="left:1100.5px;top:279px;" width="12" height="12" viewBox="0 0 12 12"><g transform="rotate(45 6 6)"><path d="M3.6 0.6 H8.4 V1.8 L7.4 2.4 V5.6 L9.2 7.4 V8.4 H2.8 V7.4 L4.6 5.6 V2.4 L3.6 1.8 z" fill="#a4acb8"/><path d="M6 8.4 V12.2" stroke="#a4acb8" stroke-width="1.1"/></g></svg>
<svg class="b" style="left:867px;top:308px;" width="16" height="16" viewBox="0 0 16 16"><rect x="1.2" y="1.4" width="13.6" height="13.6" rx="1.8" fill="#2b95e4"/><path d="M1.6 13.6 L8 7.4 L14.4 13.6 a1.8 1.8 0 0 1 -1.4 1.4 H3 a1.8 1.8 0 0 1 -1.4 -1.4 z" fill="#eaf5ff"/><circle cx="11.4" cy="4.8" r="1.1" fill="#eaf5ff"/></svg>
<span class="t" style="left:888.00px;top:310.84px;font-size:12px;color:#fff;letter-spacing:0.053px;">Bilder</span>
<svg class="b" style="left:1100.5px;top:311px;" width="12" height="12" viewBox="0 0 12 12"><g transform="rotate(45 6 6)"><path d="M3.6 0.6 H8.4 V1.8 L7.4 2.4 V5.6 L9.2 7.4 V8.4 H2.8 V7.4 L4.6 5.6 V2.4 L3.6 1.8 z" fill="#a4acb8"/><path d="M6 8.4 V12.2" stroke="#a4acb8" stroke-width="1.1"/></g></svg>
<svg class="b" style="left:867px;top:340px;" width="16" height="16" viewBox="0 0 16 16"><path d="M8 1.2 V11.4 M3.6 7.2 L8 11.6 L12.4 7.2" fill="none" stroke="#2fbf8f" stroke-width="1.4" stroke-linecap="round" stroke-linejoin="round"/><path d="M2.8 14.8 H13.2" stroke="#2a9d78" stroke-width="1.5" stroke-linecap="round"/></svg>
<span class="t" style="left:888.00px;top:342.84px;font-size:12px;color:#fff;letter-spacing:0.015px;">Downloads</span>
<svg class="b" style="left:1100.5px;top:343px;" width="12" height="12" viewBox="0 0 12 12"><g transform="rotate(45 6 6)"><path d="M3.6 0.6 H8.4 V1.8 L7.4 2.4 V5.6 L9.2 7.4 V8.4 H2.8 V7.4 L4.6 5.6 V2.4 L3.6 1.8 z" fill="#a4acb8"/><path d="M6 8.4 V12.2" stroke="#a4acb8" stroke-width="1.1"/></g></svg>
<svg class="b" style="left:867px;top:372px;" width="16" height="16" viewBox="0 0 16 16"><defs><linearGradient id="dk" x1="0" y1="0" x2="1" y2="1"><stop offset="0" stop-color="#1e8fe0"/><stop offset="1" stop-color="#22c4dc"/></linearGradient></defs><rect x="0.6" y="2.4" width="14.8" height="11.2" rx="1.4" fill="url(#dk)"/><rect x="2.2" y="4.4" width="1.4" height="1.4" fill="#d8f4ff"/><rect x="2.2" y="7.2" width="1.4" height="1.4" fill="#d8f4ff"/><rect x="0.6" y="11.6" width="14.8" height="2" fill="#1470b8"/></svg>
<span class="t" style="left:888.00px;top:374.84px;font-size:12px;color:#fff;letter-spacing:-0.075px;">Desktop</span>
<svg class="b" style="left:1100.5px;top:375px;" width="12" height="12" viewBox="0 0 12 12"><g transform="rotate(45 6 6)"><path d="M3.6 0.6 H8.4 V1.8 L7.4 2.4 V5.6 L9.2 7.4 V8.4 H2.8 V7.4 L4.6 5.6 V2.4 L3.6 1.8 z" fill="#a4acb8"/><path d="M6 8.4 V12.2" stroke="#a4acb8" stroke-width="1.1"/></g></svg>
<svg class="b" style="left:867px;top:404px;" width="16" height="16" viewBox="0 0 16 16"><rect x="2.2" y="0.8" width="11.6" height="14.6" rx="1.4" fill="#9fb4c8"/><rect x="4.2" y="4.2" width="3" height="3" fill="#dfe9f3"/><rect x="8.6" y="4.2" width="3.4" height="3" fill="#dfe9f3"/><rect x="2.2" y="12" width="11.6" height="3.4" rx="1.2" fill="#b9cbdb"/></svg>
<span class="t" style="left:888.00px;top:406.84px;font-size:12px;color:#fff;letter-spacing:0.126px;">Dokumente</span>
<svg class="b" style="left:1100.5px;top:407px;" width="12" height="12" viewBox="0 0 12 12"><g transform="rotate(45 6 6)"><path d="M3.6 0.6 H8.4 V1.8 L7.4 2.4 V5.6 L9.2 7.4 V8.4 H2.8 V7.4 L4.6 5.6 V2.4 L3.6 1.8 z" fill="#a4acb8"/><path d="M6 8.4 V12.2" stroke="#a4acb8" stroke-width="1.1"/></g></svg>
<svg class="b" style="left:867px;top:436px;" width="16" height="16" viewBox="0 0 16 16"><defs><linearGradient id="mu" x1="0" y1="0" x2="1" y2="1"><stop offset="0" stop-color="#f08a5a"/><stop offset="1" stop-color="#d9688e"/></linearGradient></defs><circle cx="8" cy="8" r="7.6" fill="url(#mu)"/><path d="M7.6 4 L10.8 3.2 V5 L8.6 5.6 V10.6 a1.7 1.7 0 1 1 -1 -1.5 z" fill="#fff"/></svg>
<span class="t" style="left:888.00px;top:438.84px;font-size:12px;color:#fff;letter-spacing:0.233px;">Musik</span>
<svg class="b" style="left:1100.5px;top:439px;" width="12" height="12" viewBox="0 0 12 12"><g transform="rotate(45 6 6)"><path d="M3.6 0.6 H8.4 V1.8 L7.4 2.4 V5.6 L9.2 7.4 V8.4 H2.8 V7.4 L4.6 5.6 V2.4 L3.6 1.8 z" fill="#a4acb8"/><path d="M6 8.4 V12.2" stroke="#a4acb8" stroke-width="1.1"/></g></svg>
<svg class="b" style="left:867px;top:468px;" width="16" height="16" viewBox="0 0 16 16"><rect x="1.2" y="1.4" width="13.6" height="13.6" rx="1.6" fill="#8a4fd8"/><rect x="1.2" y="1.4" width="2.6" height="13.6" fill="#6b36b8"/><rect x="12.2" y="1.4" width="2.6" height="13.6" fill="#6b36b8"/><path d="M6 5 L11 8.2 L6 11.4 z" fill="#fff"/><rect x="1.9" y="3.2" width="1.2" height="1.4" fill="#b794ee"/><rect x="12.9" y="3.2" width="1.2" height="1.4" fill="#b794ee"/><rect x="1.9" y="6.2" width="1.2" height="1.4" fill="#b794ee"/><rect x="12.9" y="6.2" width="1.2" height="1.4" fill="#b794ee"/><rect x="1.9" y="9.2" width="1.2" height="1.4" fill="#b794ee"/><rect x="12.9" y="9.2" width="1.2" height="1.4" fill="#b794ee"/><rect x="1.9" y="12.2" width="1.2" height="1.4" fill="#b794ee"/><rect x="12.9" y="12.2" width="1.2" height="1.4" fill="#b794ee"/></svg>
<span class="t" style="left:888.00px;top:470.84px;font-size:12px;color:#fff;letter-spacing:-0.163px;">Videos</span>
<svg class="b" style="left:1100.5px;top:471px;" width="12" height="12" viewBox="0 0 12 12"><g transform="rotate(45 6 6)"><path d="M3.6 0.6 H8.4 V1.8 L7.4 2.4 V5.6 L9.2 7.4 V8.4 H2.8 V7.4 L4.6 5.6 V2.4 L3.6 1.8 z" fill="#a4acb8"/><path d="M6 8.4 V12.2" stroke="#a4acb8" stroke-width="1.1"/></g></svg>
<svg class="b" style="left:866.6px;top:501px;" width="16.8" height="14.5" viewBox="0 0 17.5 14.5"><path d="M1.5 0.5 H6.2 a1.5 1.5 0 0 1 1.1 0.5 L8.6 2.3 H16 a1.5 1.5 0 0 1 1.5 1.5 V12.5 a1.5 1.5 0 0 1 -1.5 1.5 H1.5 a1.5 1.5 0 0 1 -1.5 -1.5 V2 a1.5 1.5 0 0 1 1.5 -1.5 z" fill="#f2b11f"/><path d="M0 4.6 a1 1 0 0 1 1 -1 H6 a1.6 1.6 0 0 0 1.1 -0.45 L7.8 2.6 a1.2 1.2 0 0 1 0.9 -0.3 H16 a1.5 1.5 0 0 1 1.5 1.5 V12.5 a1.5 1.5 0 0 1 -1.5 1.5 H1.5 a1.5 1.5 0 0 1 -1.5 -1.5 z" fill="url(#sfold)"/></svg>
<span class="t" style="left:888.00px;top:502.84px;font-size:12px;color:#fff;letter-spacing:0.065px;">Astro Programme</span>
<svg class="b" style="left:1100.5px;top:503px;" width="12" height="12" viewBox="0 0 12 12"><g transform="rotate(45 6 6)"><path d="M3.6 0.6 H8.4 V1.8 L7.4 2.4 V5.6 L9.2 7.4 V8.4 H2.8 V7.4 L4.6 5.6 V2.4 L3.6 1.8 z" fill="#a4acb8"/><path d="M6 8.4 V12.2" stroke="#a4acb8" stroke-width="1.1"/></g></svg>
<svg class="b" style="left:866.6px;top:533px;" width="16.8" height="14.5" viewBox="0 0 17.5 14.5"><path d="M1.5 0.5 H6.2 a1.5 1.5 0 0 1 1.1 0.5 L8.6 2.3 H16 a1.5 1.5 0 0 1 1.5 1.5 V12.5 a1.5 1.5 0 0 1 -1.5 1.5 H1.5 a1.5 1.5 0 0 1 -1.5 -1.5 V2 a1.5 1.5 0 0 1 1.5 -1.5 z" fill="#f2b11f"/><path d="M0 4.6 a1 1 0 0 1 1 -1 H6 a1.6 1.6 0 0 0 1.1 -0.45 L7.8 2.6 a1.2 1.2 0 0 1 0.9 -0.3 H16 a1.5 1.5 0 0 1 1.5 1.5 V12.5 a1.5 1.5 0 0 1 -1.5 1.5 H1.5 a1.5 1.5 0 0 1 -1.5 -1.5 z" fill="url(#sfold)"/></svg>
<span class="t" style="left:888.00px;top:534.84px;font-size:12px;color:#fff;letter-spacing:-0.409px;">SH2-173</span>
<svg class="b" style="left:1100.5px;top:535px;" width="12" height="12" viewBox="0 0 12 12"><g transform="rotate(45 6 6)"><path d="M3.6 0.6 H8.4 V1.8 L7.4 2.4 V5.6 L9.2 7.4 V8.4 H2.8 V7.4 L4.6 5.6 V2.4 L3.6 1.8 z" fill="#a4acb8"/><path d="M6 8.4 V12.2" stroke="#a4acb8" stroke-width="1.1"/></g></svg>
<svg class="b" style="left:866.6px;top:565px;" width="16.8" height="14.5" viewBox="0 0 17.5 14.5"><path d="M1.5 0.5 H6.2 a1.5 1.5 0 0 1 1.1 0.5 L8.6 2.3 H16 a1.5 1.5 0 0 1 1.5 1.5 V12.5 a1.5 1.5 0 0 1 -1.5 1.5 H1.5 a1.5 1.5 0 0 1 -1.5 -1.5 V2 a1.5 1.5 0 0 1 1.5 -1.5 z" fill="#f2b11f"/><path d="M0 4.6 a1 1 0 0 1 1 -1 H6 a1.6 1.6 0 0 0 1.1 -0.45 L7.8 2.6 a1.2 1.2 0 0 1 0.9 -0.3 H16 a1.5 1.5 0 0 1 1.5 1.5 V12.5 a1.5 1.5 0 0 1 -1.5 1.5 H1.5 a1.5 1.5 0 0 1 -1.5 -1.5 z" fill="url(#sfold)"/></svg>
<span class="t" style="left:888.00px;top:566.84px;font-size:12px;color:#fff;letter-spacing:0.176px;">Bildschirmfotos</span>
<svg class="b" style="left:1100.5px;top:567px;" width="12" height="12" viewBox="0 0 12 12"><g transform="rotate(45 6 6)"><path d="M3.6 0.6 H8.4 V1.8 L7.4 2.4 V5.6 L9.2 7.4 V8.4 H2.8 V7.4 L4.6 5.6 V2.4 L3.6 1.8 z" fill="#a4acb8"/><path d="M6 8.4 V12.2" stroke="#a4acb8" stroke-width="1.1"/></g></svg>
<div class="b" style="left:835.5px;top:588px;width:279.5px;height:32px;background:#333333;border-radius:3px;"></div>
<svg class="b" style="left:866.6px;top:597px;" width="16.8" height="14.5" viewBox="0 0 17.5 14.5"><path d="M1.5 0.5 H6.2 a1.5 1.5 0 0 1 1.1 0.5 L8.6 2.3 H16 a1.5 1.5 0 0 1 1.5 1.5 V12.5 a1.5 1.5 0 0 1 -1.5 1.5 H1.5 a1.5 1.5 0 0 1 -1.5 -1.5 V2 a1.5 1.5 0 0 1 1.5 -1.5 z" fill="#f2b11f"/><path d="M0 4.6 a1 1 0 0 1 1 -1 H6 a1.6 1.6 0 0 0 1.1 -0.45 L7.8 2.6 a1.2 1.2 0 0 1 0.9 -0.3 H16 a1.5 1.5 0 0 1 1.5 1.5 V12.5 a1.5 1.5 0 0 1 -1.5 1.5 H1.5 a1.5 1.5 0 0 1 -1.5 -1.5 z" fill="url(#sfold)"/></svg>
<span class="t" style="left:888.00px;top:598.84px;font-size:12px;color:#fff;letter-spacing:-0.239px;">2025-10-14</span>
<svg class="b" style="left:1100.5px;top:599px;" width="12" height="12" viewBox="0 0 12 12"><g transform="rotate(45 6 6)"><path d="M3.6 0.6 H8.4 V1.8 L7.4 2.4 V5.6 L9.2 7.4 V8.4 H2.8 V7.4 L4.6 5.6 V2.4 L3.6 1.8 z" fill="#a4acb8"/><path d="M6 8.4 V12.2" stroke="#a4acb8" stroke-width="1.1"/></g></svg>
<svg class="b" style="left:866.6px;top:629px;" width="16.8" height="14.5" viewBox="0 0 17.5 14.5"><path d="M1.5 0.5 H6.2 a1.5 1.5 0 0 1 1.1 0.5 L8.6 2.3 H16 a1.5 1.5 0 0 1 1.5 1.5 V12.5 a1.5 1.5 0 0 1 -1.5 1.5 H1.5 a1.5 1.5 0 0 1 -1.5 -1.5 V2 a1.5 1.5 0 0 1 1.5 -1.5 z" fill="#f2b11f"/><path d="M0 4.6 a1 1 0 0 1 1 -1 H6 a1.6 1.6 0 0 0 1.1 -0.45 L7.8 2.6 a1.2 1.2 0 0 1 0.9 -0.3 H16 a1.5 1.5 0 0 1 1.5 1.5 V12.5 a1.5 1.5 0 0 1 -1.5 1.5 H1.5 a1.5 1.5 0 0 1 -1.5 -1.5 z" fill="url(#sfold)"/></svg>
<span class="t" style="left:888.00px;top:630.84px;font-size:12px;color:#fff;letter-spacing:-0.418px;">LIGHTs</span>
<svg class="b" style="left:1100.5px;top:631px;" width="12" height="12" viewBox="0 0 12 12"><g transform="rotate(45 6 6)"><path d="M3.6 0.6 H8.4 V1.8 L7.4 2.4 V5.6 L9.2 7.4 V8.4 H2.8 V7.4 L4.6 5.6 V2.4 L3.6 1.8 z" fill="#a4acb8"/><path d="M6 8.4 V12.2" stroke="#a4acb8" stroke-width="1.1"/></g></svg>
<div class="b" style="left:844px;top:668px;width:263.5px;height:1px;background:#333;"></div>
<svg class="b" style="left:843.5px;top:696px;" width="12" height="8" viewBox="0 0 12 8"><path d="M2 2 L6 6 L10 2" fill="none" stroke="#d8d8d8" stroke-width="1.4" stroke-linecap="round" stroke-linejoin="round"/></svg>
<svg class="b" style="left:867px;top:692px;" width="16" height="16" viewBox="0 0 16 16"><defs><linearGradient id="pcg" x1="0" y1="0" x2="1" y2="1"><stop offset="0" stop-color="#2aa6e8"/><stop offset="1" stop-color="#27d3e6"/></linearGradient></defs><rect x="0.4" y="1.4" width="15.2" height="10.6" rx="1.2" fill="url(#pcg)"/><path d="M8 12 V14.2 M5 14.8 H11" stroke="#9db8cc" stroke-width="1.3" stroke-linecap="round"/></svg>
<span class="t" style="left:888.00px;top:694.84px;font-size:12px;color:#fff;letter-spacing:-0.465px;">Dieser PC</span>
<svg class="b" style="left:851.5px;top:724.5px;" width="12" height="16" viewBox="0 0 12 16"><path d="M4.05 4.1 L7.95 8 L4.05 11.9" fill="none" stroke="#d8d8d8" stroke-width="1.4" stroke-linecap="round" stroke-linejoin="round"/></svg>
<svg class="b" style="left:875px;top:724px;" width="16" height="16" viewBox="0 0 16 16"><rect x="1" y="8.4" width="14.2" height="5.2" rx="1" fill="#b9c2cc"/><rect x="2.2" y="10" width="6" height="1.6" fill="#5a6672"/><rect x="2" y="1.6" width="3.6" height="2.8" fill="#2f9be8"/><rect x="6.2" y="1.6" width="3.6" height="2.8" fill="#2f9be8"/><rect x="2" y="5" width="3.6" height="2.8" fill="#2f9be8"/><rect x="6.2" y="5" width="3.6" height="2.8" fill="#2f9be8"/><circle cx="12.6" cy="6.4" r="2.6" fill="#d5dbe2"/><path d="M11 6.4 a1.6 1.6 0 0 1 3.2 0" fill="none" stroke="#5a6672" stroke-width="1"/></svg>
<span class="t" style="left:896.00px;top:726.84px;font-size:12px;color:#fff;letter-spacing:-0.204px;">Lokaler Datenträger (C:)</span>
<svg class="b" style="left:843.5px;top:756.5px;" width="12" height="16" viewBox="0 0 12 16"><path d="M4.05 4.1 L7.95 8 L4.05 11.9" fill="none" stroke="#d8d8d8" stroke-width="1.4" stroke-linecap="round" stroke-linejoin="round"/></svg>
<svg class="b" style="left:867px;top:756px;" width="16" height="16" viewBox="0 0 16 16"><defs><linearGradient id="ng" x1="0" y1="0" x2="1" y2="1"><stop offset="0" stop-color="#2aa6e8"/><stop offset="1" stop-color="#27d3e6"/></linearGradient></defs><rect x="2.6" y="3.4" width="13" height="8.8" rx="1.2" fill="url(#ng)"/><path d="M9 12.2 V14.4 M6 15 H12" stroke="#9db8cc" stroke-width="1.3" stroke-linecap="round"/><circle cx="4.6" cy="4.8" r="4.2" fill="#8fd0f2"/><path d="M0.6 4.8 H8.6 M4.6 0.8 C2.6 3 2.6 6.6 4.6 8.8 C6.6 6.6 6.6 3 4.6 0.8" fill="none" stroke="#2b7db8" stroke-width="0.8"/></svg>
<span class="t" style="left:888.00px;top:758.84px;font-size:12px;color:#fff;letter-spacing:-0.064px;">Netzwerk</span>
<div class="b" style="left:1118px;top:134px;width:672px;height:874px;overflow:hidden;">
<svg class="b" style="left:31px;top:-62.5px;" width="72" height="96" viewBox="0 0 72 96"><path d="M5 0 H44.6 L72 26.6 V91 a5 5 0 0 1 -5 5 H5 a5 5 0 0 1 -5 -5 V5 a5 5 0 0 1 5 -5 z" fill="#ecedf6"/><rect x="38.5" y="0" width="6" height="27" fill="url(#fsl)"/><rect x="44.5" y="27" width="27.5" height="5" fill="url(#fsb)"/><path d="M44.5 0 H45.5 L72 25.8 V27 H48.5 a4 4 0 0 1 -4 -4 z" fill="#f2f2fa"/><g transform="translate(0 0) scale(1)"><rect x="15.2" y="31" width="39" height="36" rx="4" fill="#ef5378" transform="rotate(-10 34.5 49.5)"/><path d="M20.7 36 H53.7 a4 4 0 0 1 4 4 V66.5 a4 4 0 0 1 -4 4 H22.7 a4 4 0 0 1 -4 -4 L16.8 40.1 a3.8 3.8 0 0 1 3.9 -4.1 z" fill="url(#fcard)"/><path d="M18.5 63 C23 60.5 27 61 32 63.6 C37 66 42 63 47 62 C51 61.3 54.5 62 57.7 63.5 V66.5 a4 4 0 0 1 -4 4 H22.7 a4 4 0 0 1 -4 -4 z" fill="#ec436c"/><circle cx="24.7" cy="41.3" r="1.1" fill="#f55f83"/><circle cx="51.6" cy="41" r="1.3" fill="#f55f83"/><circle cx="41" cy="62.3" r="1.2" fill="#f45c80"/><text x="38.1" y="57.2" font-family="Liberation Sans, sans-serif" font-weight="700" font-size="14.6" fill="#fff" text-anchor="middle" textLength="27.6" lengthAdjust="spacingAndGlyphs">FITS</text></g></svg>
<span class="t" style="left:32.25px;top:35.84px;font-size:12px;color:#fff;letter-spacing:-0.429px;">pp_flat_00008</span>
<svg class="b" style="left:137px;top:-62.5px;" width="72" height="96" viewBox="0 0 72 96"><path d="M5 0 H44.6 L72 26.6 V91 a5 5 0 0 1 -5 5 H5 a5 5 0 0 1 -5 -5 V5 a5 5 0 0 1 5 -5 z" fill="#ecedf6"/><rect x="38.5" y="0" width="6" height="27" fill="url(#fsl)"/><rect x="44.5" y="27" width="27.5" height="5" fill="url(#fsb)"/><path d="M44.5 0 H45.5 L72 25.8 V27 H48.5 a4 4 0 0 1 -4 -4 z" fill="#f2f2fa"/><g transform="translate(0 0) scale(1)"><rect x="15.2" y="31" width="39" height="36" rx="4" fill="#ef5378" transform="rotate(-10 34.5 49.5)"/><path d="M20.7 36 H53.7 a4 4 0 0 1 4 4 V66.5 a4 4 0 0 1 -4 4 H22.7 a4 4 0 0 1 -4 -4 L16.8 40.1 a3.8 3.8 0 0 1 3.9 -4.1 z" fill="url(#fcard)"/><path d="M18.5 63 C23 60.5 27 61 32 63.6 C37 66 42 63 47 62 C51 61.3 54.5 62 57.7 63.5 V66.5 a4 4 0 0 1 -4 4 H22.7 a4 4 0 0 1 -4 -4 z" fill="#ec436c"/><circle cx="24.7" cy="41.3" r="1.1" fill="#f55f83"/><circle cx="51.6" cy="41" r="1.3" fill="#f55f83"/><circle cx="41" cy="62.3" r="1.2" fill="#f45c80"/><text x="38.1" y="57.2" font-family="Liberation Sans, sans-serif" font-weight="700" font-size="14.6" fill="#fff" text-anchor="middle" textLength="27.6" lengthAdjust="spacingAndGlyphs">FITS</text></g></svg>
<span class="t" style="left:138.25px;top:35.84px;font-size:12px;color:#fff;letter-spacing:-0.429px;">pp_flat_00009</span>
<svg class="b" style="left:243px;top:-62.5px;" width="72" height="96" viewBox="0 0 72 96"><path d="M5 0 H44.6 L72 26.6 V91 a5 5 0 0 1 -5 5 H5 a5 5 0 0 1 -5 -5 V5 a5 5 0 0 1 5 -5 z" fill="#ecedf6"/><rect x="38.5" y="0" width="6" height="27" fill="url(#fsl)"/><rect x="44.5" y="27" width="27.5" height="5" fill="url(#fsb)"/><path d="M44.5 0 H45.5 L72 25.8 V27 H48.5 a4 4 0 0 1 -4 -4 z" fill="#f2f2fa"/><g transform="translate(0 0) scale(1)"><rect x="15.2" y="31" width="39" height="36" rx="4" fill="#ef5378" transform="rotate(-10 34.5 49.5)"/><path d="M20.7 36 H53.7 a4 4 0 0 1 4 4 V66.5 a4 4 0 0 1 -4 4 H22.7 a4 4 0 0 1 -4 -4 L16.8 40.1 a3.8 3.8 0 0 1 3.9 -4.1 z" fill="url(#fcard)"/><path d="M18.5 63 C23 60.5 27 61 32 63.6 C37 66 42 63 47 62 C51 61.3 54.5 62 57.7 63.5 V66.5 a4 4 0 0 1 -4 4 H22.7 a4 4 0 0 1 -4 -4 z" fill="#ec436c"/><circle cx="24.7" cy="41.3" r="1.1" fill="#f55f83"/><circle cx="51.6" cy="41" r="1.3" fill="#f55f83"/><circle cx="41" cy="62.3" r="1.2" fill="#f45c80"/><text x="38.1" y="57.2" font-family="Liberation Sans, sans-serif" font-weight="700" font-size="14.6" fill="#fff" text-anchor="middle" textLength="27.6" lengthAdjust="spacingAndGlyphs">FITS</text></g></svg>
<span class="t" style="left:244.25px;top:35.84px;font-size:12px;color:#fff;letter-spacing:-0.429px;">pp_flat_00010</span>
<svg class="b" style="left:349px;top:-62.5px;" width="72" height="96" viewBox="0 0 72 96"><path d="M5 0 H44.6 L72 26.6 V91 a5 5 0 0 1 -5 5 H5 a5 5 0 0 1 -5 -5 V5 a5 5 0 0 1 5 -5 z" fill="#ecedf6"/><rect x="38.5" y="0" width="6" height="27" fill="url(#fsl)"/><rect x="44.5" y="27" width="27.5" height="5" fill="url(#fsb)"/><path d="M44.5 0 H45.5 L72 25.8 V27 H48.5 a4 4 0 0 1 -4 -4 z" fill="#f2f2fa"/><g transform="translate(0 0) scale(1)"><rect x="15.2" y="31" width="39" height="36" rx="4" fill="#ef5378" transform="rotate(-10 34.5 49.5)"/><path d="M20.7 36 H53.7 a4 4 0 0 1 4 4 V66.5 a4 4 0 0 1 -4 4 H22.7 a4 4 0 0 1 -4 -4 L16.8 40.1 a3.8 3.8 0 0 1 3.9 -4.1 z" fill="url(#fcard)"/><path d="M18.5 63 C23 60.5 27 61 32 63.6 C37 66 42 63 47 62 C51 61.3 54.5 62 57.7 63.5 V66.5 a4 4 0 0 1 -4 4 H22.7 a4 4 0 0 1 -4 -4 z" fill="#ec436c"/><circle cx="24.7" cy="41.3" r="1.1" fill="#f55f83"/><circle cx="51.6" cy="41" r="1.3" fill="#f55f83"/><circle cx="41" cy="62.3" r="1.2" fill="#f45c80"/><text x="38.1" y="57.2" font-family="Liberation Sans, sans-serif" font-weight="700" font-size="14.6" fill="#fff" text-anchor="middle" textLength="27.6" lengthAdjust="spacingAndGlyphs">FITS</text></g></svg>
<span class="t" style="left:350.25px;top:35.84px;font-size:12px;color:#fff;letter-spacing:-0.360px;">pp_flat_00011</span>
<svg class="b" style="left:455px;top:-62.5px;" width="72" height="96" viewBox="0 0 72 96"><path d="M5 0 H44.6 L72 26.6 V91 a5 5 0 0 1 -5 5 H5 a5 5 0 0 1 -5 -5 V5 a5 5 0 0 1 5 -5 z" fill="#ecedf6"/><rect x="38.5" y="0" width="6" height="27" fill="url(#fsl)"/><rect x="44.5" y="27" width="27.5" height="5" fill="url(#fsb)"/><path d="M44.5 0 H45.5 L72 25.8 V27 H48.5 a4 4 0 0 1 -4 -4 z" fill="#f2f2fa"/><g transform="translate(0 0) scale(1)"><rect x="15.2" y="31" width="39" height="36" rx="4" fill="#ef5378" transform="rotate(-10 34.5 49.5)"/><path d="M20.7 36 H53.7 a4 4 0 0 1 4 4 V66.5 a4 4 0 0 1 -4 4 H22.7 a4 4 0 0 1 -4 -4 L16.8 40.1 a3.8 3.8 0 0 1 3.9 -4.1 z" fill="url(#fcard)"/><path d="M18.5 63 C23 60.5 27 61 32 63.6 C37 66 42 63 47 62 C51 61.3 54.5 62 57.7 63.5 V66.5 a4 4 0 0 1 -4 4 H22.7 a4 4 0 0 1 -4 -4 z" fill="#ec436c"/><circle cx="24.7" cy="41.3" r="1.1" fill="#f55f83"/><circle cx="51.6" cy="41" r="1.3" fill="#f55f83"/><circle cx="41" cy="62.3" r="1.2" fill="#f45c80"/><text x="38.1" y="57.2" font-family="Liberation Sans, sans-serif" font-weight="700" font-size="14.6" fill="#fff" text-anchor="middle" textLength="27.6" lengthAdjust="spacingAndGlyphs">FITS</text></g></svg>
<span class="t" style="left:456.25px;top:35.84px;font-size:12px;color:#fff;letter-spacing:-0.429px;">pp_flat_00012</span>
<svg class="b" style="left:561px;top:-62.5px;" width="72" height="96" viewBox="0 0 72 96"><path d="M5 0 H44.6 L72 26.6 V91 a5 5 0 0 1 -5 5 H5 a5 5 0 0 1 -5 -5 V5 a5 5 0 0 1 5 -5 z" fill="#ecedf6"/><rect x="38.5" y="0" width="6" height="27" fill="url(#fsl)"/><rect x="44.5" y="27" width="27.5" height="5" fill="url(#fsb)"/><path d="M44.5 0 H45.5 L72 25.8 V27 H48.5 a4 4 0 0 1 -4 -4 z" fill="#f2f2fa"/><g transform="translate(0 0) scale(1)"><rect x="15.2" y="31" width="39" height="36" rx="4" fill="#ef5378" transform="rotate(-10 34.5 49.5)"/><path d="M20.7 36 H53.7 a4 4 0 0 1 4 4 V66.5 a4 4 0 0 1 -4 4 H22.7 a4 4 0 0 1 -4 -4 L16.8 40.1 a3.8 3.8 0 0 1 3.9 -4.1 z" fill="url(#fcard)"/><path d="M18.5 63 C23 60.5 27 61 32 63.6 C37 66 42 63 47 62 C51 61.3 54.5 62 57.7 63.5 V66.5 a4 4 0 0 1 -4 4 H22.7 a4 4 0 0 1 -4 -4 z" fill="#ec436c"/><circle cx="24.7" cy="41.3" r="1.1" fill="#f55f83"/><circle cx="51.6" cy="41" r="1.3" fill="#f55f83"/><circle cx="41" cy="62.3" r="1.2" fill="#f45c80"/><text x="38.1" y="57.2" font-family="Liberation Sans, sans-serif" font-weight="700" font-size="14.6" fill="#fff" text-anchor="middle" textLength="27.6" lengthAdjust="spacingAndGlyphs">FITS</text></g></svg>
<span class="t" style="left:562.25px;top:35.84px;font-size:12px;color:#fff;letter-spacing:-0.429px;">pp_flat_00013</span>
<svg class="b" style="left:31px;top:54.5px;" width="72" height="96" viewBox="0 0 72 96"><path d="M5 0 H44.6 L72 26.6 V91 a5 5 0 0 1 -5 5 H5 a5 5 0 0 1 -5 -5 V5 a5 5 0 0 1 5 -5 z" fill="#ecedf6"/><rect x="38.5" y="0" width="6" height="27" fill="url(#fsl)"/><rect x="44.5" y="27" width="27.5" height="5" fill="url(#fsb)"/><path d="M44.5 0 H45.5 L72 25.8 V27 H48.5 a4 4 0 0 1 -4 -4 z" fill="#f2f2fa"/><g transform="translate(0 0) scale(1)"><rect x="15.2" y="31" width="39" height="36" rx="4" fill="#ef5378" transform="rotate(-10 34.5 49.5)"/><path d="M20.7 36 H53.7 a4 4 0 0 1 4 4 V66.5 a4 4 0 0 1 -4 4 H22.7 a4 4 0 0 1 -4 -4 L16.8 40.1 a3.8 3.8 0 0 1 3.9 -4.1 z" fill="url(#fcard)"/><path d="M18.5 63 C23 60.5 27 61 32 63.6 C37 66 42 63 47 62 C51 61.3 54.5 62 57.7 63.5 V66.5 a4 4 0 0 1 -4 4 H22.7 a4 4 0 0 1 -4 -4 z" fill="#ec436c"/><circle cx="24.7" cy="41.3" r="1.1" fill="#f55f83"/><circle cx="51.6" cy="41" r="1.3" fill="#f55f83"/><circle cx="41" cy="62.3" r="1.2" fill="#f45c80"/><text x="38.1" y="57.2" font-family="Liberation Sans, sans-serif" font-weight="700" font-size="14.6" fill="#fff" text-anchor="middle" textLength="27.6" lengthAdjust="spacingAndGlyphs">FITS</text></g></svg>
<span class="t" style="left:32.25px;top:152.84px;font-size:12px;color:#fff;letter-spacing:-0.429px;">pp_flat_00014</span>
<svg class="b" style="left:137px;top:54.5px;" width="72" height="96" viewBox="0 0 72 96"><path d="M5 0 H44.6 L72 26.6 V91 a5 5 0 0 1 -5 5 H5 a5 5 0 0 1 -5 -5 V5 a5 5 0 0 1 5 -5 z" fill="#ecedf6"/><rect x="38.5" y="0" width="6" height="27" fill="url(#fsl)"/><rect x="44.5" y="27" width="27.5" height="5" fill="url(#fsb)"/><path d="M44.5 0 H45.5 L72 25.8 V27 H48.5 a4 4 0 0 1 -4 -4 z" fill="#f2f2fa"/><g transform="translate(0 0) scale(1)"><rect x="15.2" y="31" width="39" height="36" rx="4" fill="#ef5378" transform="rotate(-10 34.5 49.5)"/><path d="M20.7 36 H53.7 a4 4 0 0 1 4 4 V66.5 a4 4 0 0 1 -4 4 H22.7 a4 4 0 0 1 -4 -4 L16.8 40.1 a3.8 3.8 0 0 1 3.9 -4.1 z" fill="url(#fcard)"/><path d="M18.5 63 C23 60.5 27 61 32 63.6 C37 66 42 63 47 62 C51 61.3 54.5 62 57.7 63.5 V66.5 a4 4 0 0 1 -4 4 H22.7 a4 4 0 0 1 -4 -4 z" fill="#ec436c"/><circle cx="24.7" cy="41.3" r="1.1" fill="#f55f83"/><circle cx="51.6" cy="41" r="1.3" fill="#f55f83"/><circle cx="41" cy="62.3" r="1.2" fill="#f45c80"/><text x="38.1" y="57.2" font-family="Liberation Sans, sans-serif" font-weight="700" font-size="14.6" fill="#fff" text-anchor="middle" textLength="27.6" lengthAdjust="spacingAndGlyphs">FITS</text></g></svg>
<span class="t" style="left:138.25px;top:152.84px;font-size:12px;color:#fff;letter-spacing:-0.429px;">pp_flat_00015</span>
<svg class="b" style="left:243px;top:54.5px;" width="72" height="96" viewBox="0 0 72 96"><path d="M5 0 H44.6 L72 26.6 V91 a5 5 0 0 1 -5 5 H5 a5 5 0 0 1 -5 -5 V5 a5 5 0 0 1 5 -5 z" fill="#ecedf6"/><rect x="38.5" y="0" width="6" height="27" fill="url(#fsl)"/><rect x="44.5" y="27" width="27.5" height="5" fill="url(#fsb)"/><path d="M44.5 0 H45.5 L72 25.8 V27 H48.5 a4 4 0 0 1 -4 -4 z" fill="#f2f2fa"/><g transform="translate(0 0) scale(1)"><rect x="15.2" y="31" width="39" height="36" rx="4" fill="#ef5378" transform="rotate(-10 34.5 49.5)"/><path d="M20.7 36 H53.7 a4 4 0 0 1 4 4 V66.5 a4 4 0 0 1 -4 4 H22.7 a4 4 0 0 1 -4 -4 L16.8 40.1 a3.8 3.8 0 0 1 3.9 -4.1 z" fill="url(#fcard)"/><path d="M18.5 63 C23 60.5 27 61 32 63.6 C37 66 42 63 47 62 C51 61.3 54.5 62 57.7 63.5 V66.5 a4 4 0 0 1 -4 4 H22.7 a4 4 0 0 1 -4 -4 z" fill="#ec436c"/><circle cx="24.7" cy="41.3" r="1.1" fill="#f55f83"/><circle cx="51.6" cy="41" r="1.3" fill="#f55f83"/><circle cx="41" cy="62.3" r="1.2" fill="#f45c80"/><text x="38.1" y="57.2" font-family="Liberation Sans, sans-serif" font-weight="700" font-size="14.6" fill="#fff" text-anchor="middle" textLength="27.6" lengthAdjust="spacingAndGlyphs">FITS</text></g></svg>
<span class="t" style="left:244.25px;top:152.84px;font-size:12px;color:#fff;letter-spacing:-0.429px;">pp_flat_00016</span>
<svg class="b" style="left:349px;top:54.5px;" width="72" height="96" viewBox="0 0 72 96"><path d="M5 0 H44.6 L72 26.6 V91 a5 5 0 0 1 -5 5 H5 a5 5 0 0 1 -5 -5 V5 a5 5 0 0 1 5 -5 z" fill="#ecedf6"/><rect x="38.5" y="0" width="6" height="27" fill="url(#fsl)"/><rect x="44.5" y="27" width="27.5" height="5" fill="url(#fsb)"/><path d="M44.5 0 H45.5 L72 25.8 V27 H48.5 a4 4 0 0 1 -4 -4 z" fill="#f2f2fa"/><g transform="translate(0 0) scale(1)"><rect x="15.2" y="31" width="39" height="36" rx="4" fill="#ef5378" transform="rotate(-10 34.5 49.5)"/><path d="M20.7 36 H53.7 a4 4 0 0 1 4 4 V66.5 a4 4 0 0 1 -4 4 H22.7 a4 4 0 0 1 -4 -4 L16.8 40.1 a3.8 3.8 0 0 1 3.9 -4.1 z" fill="url(#fcard)"/><path d="M18.5 63 C23 60.5 27 61 32 63.6 C37 66 42 63 47 62 C51 61.3 54.5 62 57.7 63.5 V66.5 a4 4 0 0 1 -4 4 H22.7 a4 4 0 0 1 -4 -4 z" fill="#ec436c"/><circle cx="24.7" cy="41.3" r="1.1" fill="#f55f83"/><circle cx="51.6" cy="41" r="1.3" fill="#f55f83"/><circle cx="41" cy="62.3" r="1.2" fill="#f45c80"/><text x="38.1" y="57.2" font-family="Liberation Sans, sans-serif" font-weight="700" font-size="14.6" fill="#fff" text-anchor="middle" textLength="27.6" lengthAdjust="spacingAndGlyphs">FITS</text></g></svg>
<span class="t" style="left:350.25px;top:152.84px;font-size:12px;color:#fff;letter-spacing:-0.429px;">pp_flat_00017</span>
<svg class="b" style="left:455px;top:54.5px;" width="72" height="96" viewBox="0 0 72 96"><path d="M5 0 H44.6 L72 26.6 V91 a5 5 0 0 1 -5 5 H5 a5 5 0 0 1 -5 -5 V5 a5 5 0 0 1 5 -5 z" fill="#ecedf6"/><rect x="38.5" y="0" width="6" height="27" fill="url(#fsl)"/><rect x="44.5" y="27" width="27.5" height="5" fill="url(#fsb)"/><path d="M44.5 0 H45.5 L72 25.8 V27 H48.5 a4 4 0 0 1 -4 -4 z" fill="#f2f2fa"/><g transform="translate(0 0) scale(1)"><rect x="15.2" y="31" width="39" height="36" rx="4" fill="#ef5378" transform="rotate(-10 34.5 49.5)"/><path d="M20.7 36 H53.7 a4 4 0 0 1 4 4 V66.5 a4 4 0 0 1 -4 4 H22.7 a4 4 0 0 1 -4 -4 L16.8 40.1 a3.8 3.8 0 0 1 3.9 -4.1 z" fill="url(#fcard)"/><path d="M18.5 63 C23 60.5 27 61 32 63.6 C37 66 42 63 47 62 C51 61.3 54.5 62 57.7 63.5 V66.5 a4 4 0 0 1 -4 4 H22.7 a4 4 0 0 1 -4 -4 z" fill="#ec436c"/><circle cx="24.7" cy="41.3" r="1.1" fill="#f55f83"/><circle cx="51.6" cy="41" r="1.3" fill="#f55f83"/><circle cx="41" cy="62.3" r="1.2" fill="#f45c80"/><text x="38.1" y="57.2" font-family="Liberation Sans, sans-serif" font-weight="700" font-size="14.6" fill="#fff" text-anchor="middle" textLength="27.6" lengthAdjust="spacingAndGlyphs">FITS</text></g></svg>
<span class="t" style="left:456.25px;top:152.84px;font-size:12px;color:#fff;letter-spacing:-0.429px;">pp_flat_00018</span>
<svg class="b" style="left:561px;top:54.5px;" width="72" height="96" viewBox="0 0 72 96"><path d="M5 0 H44.6 L72 26.6 V91 a5 5 0 0 1 -5 5 H5 a5 5 0 0 1 -5 -5 V5 a5 5 0 0 1 5 -5 z" fill="#ecedf6"/><rect x="38.5" y="0" width="6" height="27" fill="url(#fsl)"/><rect x="44.5" y="27" width="27.5" height="5" fill="url(#fsb)"/><path d="M44.5 0 H45.5 L72 25.8 V27 H48.5 a4 4 0 0 1 -4 -4 z" fill="#f2f2fa"/><g transform="translate(0 0) scale(1)"><rect x="15.2" y="31" width="39" height="36" rx="4" fill="#ef5378" transform="rotate(-10 34.5 49.5)"/><path d="M20.7 36 H53.7 a4 4 0 0 1 4 4 V66.5 a4 4 0 0 1 -4 4 H22.7 a4 4 0 0 1 -4 -4 L16.8 40.1 a3.8 3.8 0 0 1 3.9 -4.1 z" fill="url(#fcard)"/><path d="M18.5 63 C23 60.5 27 61 32 63.6 C37 66 42 63 47 62 C51 61.3 54.5 62 57.7 63.5 V66.5 a4 4 0 0 1 -4 4 H22.7 a4 4 0 0 1 -4 -4 z" fill="#ec436c"/><circle cx="24.7" cy="41.3" r="1.1" fill="#f55f83"/><circle cx="51.6" cy="41" r="1.3" fill="#f55f83"/><circle cx="41" cy="62.3" r="1.2" fill="#f45c80"/><text x="38.1" y="57.2" font-family="Liberation Sans, sans-serif" font-weight="700" font-size="14.6" fill="#fff" text-anchor="middle" textLength="27.6" lengthAdjust="spacingAndGlyphs">FITS</text></g></svg>
<span class="t" style="left:562.25px;top:152.84px;font-size:12px;color:#fff;letter-spacing:-0.429px;">pp_flat_00019</span>
<svg class="b" style="left:31px;top:171.5px;" width="72" height="96" viewBox="0 0 72 96"><path d="M5 0 H44.6 L72 26.6 V91 a5 5 0 0 1 -5 5 H5 a5 5 0 0 1 -5 -5 V5 a5 5 0 0 1 5 -5 z" fill="#ecedf6"/><rect x="38.5" y="0" width="6" height="27" fill="url(#fsl)"/><rect x="44.5" y="27" width="27.5" height="5" fill="url(#fsb)"/><path d="M44.5 0 H45.5 L72 25.8 V27 H48.5 a4 4 0 0 1 -4 -4 z" fill="#f2f2fa"/><g transform="translate(0 0) scale(1)"><rect x="15.2" y="31" width="39" height="36" rx="4" fill="#ef5378" transform="rotate(-10 34.5 49.5)"/><path d="M20.7 36 H53.7 a4 4 0 0 1 4 4 V66.5 a4 4 0 0 1 -4 4 H22.7 a4 4 0 0 1 -4 -4 L16.8 40.1 a3.8 3.8 0 0 1 3.9 -4.1 z" fill="url(#fcard)"/><path d="M18.5 63 C23 60.5 27 61 32 63.6 C37 66 42 63 47 62 C51 61.3 54.5 62 57.7 63.5 V66.5 a4 4 0 0 1 -4 4 H22.7 a4 4 0 0 1 -4 -4 z" fill="#ec436c"/><circle cx="24.7" cy="41.3" r="1.1" fill="#f55f83"/><circle cx="51.6" cy="41" r="1.3" fill="#f55f83"/><circle cx="41" cy="62.3" r="1.2" fill="#f45c80"/><text x="38.1" y="57.2" font-family="Liberation Sans, sans-serif" font-weight="700" font-size="14.6" fill="#fff" text-anchor="middle" textLength="27.6" lengthAdjust="spacingAndGlyphs">FITS</text></g></svg>
<span class="t" style="left:32.25px;top:269.84px;font-size:12px;color:#fff;letter-spacing:-0.429px;">pp_flat_00020</span>
<svg class="b" style="left:140px;top:177.5px;" width="66" height="84" viewBox="0 0 66 84"><path d="M4.5 0 H44 L66 20.5 V79.5 a4.5 4.5 0 0 1 -4.5 4.5 H4.5 a4.5 4.5 0 0 1 -4.5 -4.5 V4.5 a4.5 4.5 0 0 1 4.5 -4.5 z" fill="#f6f4f1"/><path d="M44 0 L66 20.5 H47.5 a3.5 3.5 0 0 1 -3.5 -3.5 z" fill="#dcdad5"/><circle cx="33" cy="46" r="21.4" fill="url(#sir)"/><g transform="translate(33 46) scale(1)" fill="none" stroke="#d8d2f4" stroke-width="1.7" stroke-linecap="round" stroke-linejoin="round"><path d="M2.23 -0.90 L2.67 -0.63 L3.02 -0.24 L3.30 0.25 L3.49 0.81 L3.57 1.43 L3.54 2.08 L3.37 2.76 L3.08 3.42 L2.66 4.06 L2.11 4.64 L1.45 5.14 L0.68 5.54 L-0.18 5.82 L-1.10 5.95 L-2.07 5.94 L-3.06 5.76 L-4.04 5.41 L-4.98 4.89 L-5.85 4.21 L-6.63 3.38 L-7.28 2.40 L-7.78 1.30 L-8.11 0.11 L-8.25 -1.16 L-8.19 -2.47 L-7.92 -3.78 L-7.44 -5.06 L-6.74 -6.29 L-5.84 -7.41 L-4.75 -8.40 L-3.50 -9.23 L-2.10 -9.87 L-0.58 -10.29 L1.01 -10.47 L2.64 -10.41 L4.28 -10.08 L5.87 -9.49 L7.39 -8.65 L8.78 -7.56 L10.01 -6.25"/><path d="M-2.19 0.98 L-2.66 0.73 L-3.05 0.35 L-3.37 -0.13 L-3.59 -0.70 L-3.71 -1.33 L-3.70 -2.01 L-3.57 -2.71 L-3.30 -3.42 L-2.89 -4.09 L-2.35 -4.72 L-1.69 -5.27 L-0.90 -5.71 L-0.03 -6.04 L0.93 -6.22 L1.94 -6.24 L2.97 -6.10 L4.01 -5.78 L5.01 -5.28 L5.94 -4.60 L6.79 -3.76 L7.50 -2.77 L8.07 -1.64 L8.47 -0.41 L8.67 0.91 L8.66 2.28 L8.42 3.66 L7.97 5.03 L7.29 6.33 L6.39 7.55 L5.29 8.63 L4.00 9.54 L2.56 10.27 L0.99 10.76 L-0.67 11.02 L-2.39 11.01 L-4.12 10.73 L-5.82 10.18 L-7.44 9.35 L-8.94 8.26 L-10.28 6.93"/></g><g fill="#cfd6fb" transform="translate(33 46) scale(1)"><circle cx="-10" cy="-13" r="1.3"/><circle cx="1.5" cy="-14.5" r="0.8"/><circle cx="18.5" cy="-3.5" r="0.8"/><circle cx="-15.5" cy="2" r="0.8"/><circle cx="11.5" cy="8" r="0.8"/><circle cx="-3" cy="16.5" r="1.4"/></g></svg>
<span class="t" style="left:150.00px;top:269.84px;font-size:12px;color:#fff;letter-spacing:-0.190px;">pp_light_</span>
<div class="b" style="left:227px;top:284px;width:105px;height:4px;background:#356a82;"></div>
<div class="b" style="left:227px;top:170px;width:105px;height:115px;background:#636363;box-sizing:border-box;border:1px solid #96c1d9;"></div>
<svg class="b" style="left:243px;top:171.5px;" width="72" height="96" viewBox="0 0 72 96"><path d="M5 0 H44.6 L72 26.6 V91 a5 5 0 0 1 -5 5 H5 a5 5 0 0 1 -5 -5 V5 a5 5 0 0 1 5 -5 z" fill="#ecedf6"/><rect x="38.5" y="0" width="6" height="27" fill="url(#fsl)"/><rect x="44.5" y="27" width="27.5" height="5" fill="url(#fsb)"/><path d="M44.5 0 H45.5 L72 25.8 V27 H48.5 a4 4 0 0 1 -4 -4 z" fill="#f2f2fa"/><g transform="translate(0 0) scale(1)"><rect x="15.2" y="31" width="39" height="36" rx="4" fill="#ef5378" transform="rotate(-10 34.5 49.5)"/><path d="M20.7 36 H53.7 a4 4 0 0 1 4 4 V66.5 a4 4 0 0 1 -4 4 H22.7 a4 4 0 0 1 -4 -4 L16.8 40.1 a3.8 3.8 0 0 1 3.9 -4.1 z" fill="url(#fcard)"/><path d="M18.5 63 C23 60.5 27 61 32 63.6 C37 66 42 63 47 62 C51 61.3 54.5 62 57.7 63.5 V66.5 a4 4 0 0 1 -4 4 H22.7 a4 4 0 0 1 -4 -4 z" fill="#ec436c"/><circle cx="24.7" cy="41.3" r="1.1" fill="#f55f83"/><circle cx="51.6" cy="41" r="1.3" fill="#f55f83"/><circle cx="41" cy="62.3" r="1.2" fill="#f45c80"/><text x="38.1" y="57.2" font-family="Liberation Sans, sans-serif" font-weight="700" font-size="14.6" fill="#fff" text-anchor="middle" textLength="27.6" lengthAdjust="spacingAndGlyphs">FITS</text></g></svg>
<svg class="b" style="left:230.6px;top:171.6px;" width="13" height="13" viewBox="0 0 13 13"><rect x="0" y="0" width="13" height="13" rx="3" fill="#1868cf"/><path d="M3.2 6.8 L5.6 9.2 L10 4.4" fill="none" stroke="#fff" stroke-width="1.3" stroke-linecap="round" stroke-linejoin="round"/></svg>
<span class="t" style="left:241.00px;top:269.84px;font-size:12px;color:#fff;letter-spacing:-0.363px;">pp_light_00001</span>
<div class="b" style="left:333px;top:284px;width:105px;height:4px;background:#356a82;"></div>
<div class="b" style="left:333px;top:170px;width:105px;height:115px;background:#636363;box-sizing:border-box;border:1px solid #96c1d9;"></div>
<svg class="b" style="left:349px;top:171.5px;" width="72" height="96" viewBox="0 0 72 96"><path d="M5 0 H44.6 L72 26.6 V91 a5 5 0 0 1 -5 5 H5 a5 5 0 0 1 -5 -5 V5 a5 5 0 0 1 5 -5 z" fill="#ecedf6"/><rect x="38.5" y="0" width="6" height="27" fill="url(#fsl)"/><rect x="44.5" y="27" width="27.5" height="5" fill="url(#fsb)"/><path d="M44.5 0 H45.5 L72 25.8 V27 H48.5 a4 4 0 0 1 -4 -4 z" fill="#f2f2fa"/><g transform="translate(0 0) scale(1)"><rect x="15.2" y="31" width="39" height="36" rx="4" fill="#ef5378" transform="rotate(-10 34.5 49.5)"/><path d="M20.7 36 H53.7 a4 4 0 0 1 4 4 V66.5 a4 4 0 0 1 -4 4 H22.7 a4 4 0 0 1 -4 -4 L16.8 40.1 a3.8 3.8 0 0 1 3.9 -4.1 z" fill="url(#fcard)"/><path d="M18.5 63 C23 60.5 27 61 32 63.6 C37 66 42 63 47 62 C51 61.3 54.5 62 57.7 63.5 V66.5 a4 4 0 0 1 -4 4 H22.7 a4 4 0 0 1 -4 -4 z" fill="#ec436c"/><circle cx="24.7" cy="41.3" r="1.1" fill="#f55f83"/><circle cx="51.6" cy="41" r="1.3" fill="#f55f83"/><circle cx="41" cy="62.3" r="1.2" fill="#f45c80"/><text x="38.1" y="57.2" font-family="Liberation Sans, sans-serif" font-weight="700" font-size="14.6" fill="#fff" text-anchor="middle" textLength="27.6" lengthAdjust="spacingAndGlyphs">FITS</text></g></svg>
<svg class="b" style="left:336.6px;top:171.6px;" width="13" height="13" viewBox="0 0 13 13"><rect x="0" y="0" width="13" height="13" rx="3" fill="#1868cf"/><path d="M3.2 6.8 L5.6 9.2 L10 4.4" fill="none" stroke="#fff" stroke-width="1.3" stroke-linecap="round" stroke-linejoin="round"/></svg>
<span class="t" style="left:347.00px;top:269.84px;font-size:12px;color:#fff;letter-spacing:-0.363px;">pp_light_00002</span>
<div class="b" style="left:439px;top:284px;width:105px;height:4px;background:#356a82;"></div>
<div class="b" style="left:439px;top:170px;width:105px;height:115px;background:#636363;box-sizing:border-box;border:1px solid #96c1d9;"></div>
<svg class="b" style="left:455px;top:171.5px;" width="72" height="96" viewBox="0 0 72 96"><path d="M5 0 H44.6 L72 26.6 V91 a5 5 0 0 1 -5 5 H5 a5 5 0 0 1 -5 -5 V5 a5 5 0 0 1 5 -5 z" fill="#ecedf6"/><rect x="38.5" y="0" width="6" height="27" fill="url(#fsl)"/><rect x="44.5" y="27" width="27.5" height="5" fill="url(#fsb)"/><path d="M44.5 0 H45.5 L72 25.8 V27 H48.5 a4 4 0 0 1 -4 -4 z" fill="#f2f2fa"/><g transform="translate(0 0) scale(1)"><rect x="15.2" y="31" width="39" height="36" rx="4" fill="#ef5378" transform="rotate(-10 34.5 49.5)"/><path d="M20.7 36 H53.7 a4 4 0 0 1 4 4 V66.5 a4 4 0 0 1 -4 4 H22.7 a4 4 0 0 1 -4 -4 L16.8 40.1 a3.8 3.8 0 0 1 3.9 -4.1 z" fill="url(#fcard)"/><path d="M18.5 63 C23 60.5 27 61 32 63.6 C37 66 42 63 47 62 C51 61.3 54.5 62 57.7 63.5 V66.5 a4 4 0 0 1 -4 4 H22.7 a4 4 0 0 1 -4 -4 z" fill="#ec436c"/><circle cx="24.7" cy="41.3" r="1.1" fill="#f55f83"/><circle cx="51.6" cy="41" r="1.3" fill="#f55f83"/><circle cx="41" cy="62.3" r="1.2" fill="#f45c80"/><text x="38.1" y="57.2" font-family="Liberation Sans, sans-serif" font-weight="700" font-size="14.6" fill="#fff" text-anchor="middle" textLength="27.6" lengthAdjust="spacingAndGlyphs">FITS</text></g></svg>
<svg class="b" style="left:442.6px;top:171.6px;" width="13" height="13" viewBox="0 0 13 13"><rect x="0" y="0" width="13" height="13" rx="3" fill="#1868cf"/><path d="M3.2 6.8 L5.6 9.2 L10 4.4" fill="none" stroke="#fff" stroke-width="1.3" stroke-linecap="round" stroke-linejoin="round"/></svg>
<span class="t" style="left:453.00px;top:269.84px;font-size:12px;color:#fff;letter-spacing:-0.363px;">pp_light_00003</span>
<div class="b" style="left:545px;top:284px;width:105px;height:4px;background:#356a82;"></div>
<div class="b" style="left:545px;top:170px;width:105px;height:115px;background:#636363;box-sizing:border-box;border:1px solid #96c1d9;"></div>
<svg class="b" style="left:561px;top:171.5px;" width="72" height="96" viewBox="0 0 72 96"><path d="M5 0 H44.6 L72 26.6 V91 a5 5 0 0 1 -5 5 H5 a5 5 0 0 1 -5 -5 V5 a5 5 0 0 1 5 -5 z" fill="#ecedf6"/><rect x="38.5" y="0" width="6" height="27" fill="url(#fsl)"/><rect x="44.5" y="27" width="27.5" height="5" fill="url(#fsb)"/><path d="M44.5 0 H45.5 L72 25.8 V27 H48.5 a4 4 0 0 1 -4 -4 z" fill="#f2f2fa"/><g transform="translate(0 0) scale(1)"><rect x="15.2" y="31" width="39" height="36" rx="4" fill="#ef5378" transform="rotate(-10 34.5 49.5)"/><path d="M20.7 36 H53.7 a4 4 0 0 1 4 4 V66.5 a4 4 0 0 1 -4 4 H22.7 a4 4 0 0 1 -4 -4 L16.8 40.1 a3.8 3.8 0 0 1 3.9 -4.1 z" fill="url(#fcard)"/><path d="M18.5 63 C23 60.5 27 61 32 63.6 C37 66 42 63 47 62 C51 61.3 54.5 62 57.7 63.5 V66.5 a4 4 0 0 1 -4 4 H22.7 a4 4 0 0 1 -4 -4 z" fill="#ec436c"/><circle cx="24.7" cy="41.3" r="1.1" fill="#f55f83"/><circle cx="51.6" cy="41" r="1.3" fill="#f55f83"/><circle cx="41" cy="62.3" r="1.2" fill="#f45c80"/><text x="38.1" y="57.2" font-family="Liberation Sans, sans-serif" font-weight="700" font-size="14.6" fill="#fff" text-anchor="middle" textLength="27.6" lengthAdjust="spacingAndGlyphs">FITS</text></g></svg>
<svg class="b" style="left:548.6px;top:171.6px;" width="13" height="13" viewBox="0 0 13 13"><rect x="0" y="0" width="13" height="13" rx="3" fill="#1868cf"/><path d="M3.2 6.8 L5.6 9.2 L10 4.4" fill="none" stroke="#fff" stroke-width="1.3" stroke-linecap="round" stroke-linejoin="round"/></svg>
<span class="t" style="left:559.00px;top:269.84px;font-size:12px;color:#fff;letter-spacing:-0.363px;">pp_light_00004</span>
<div class="b" style="left:15px;top:401px;width:105px;height:4px;background:#356a82;"></div>
<div class="b" style="left:15px;top:287px;width:105px;height:115px;background:#636363;box-sizing:border-box;border:1px solid #96c1d9;"></div>
<svg class="b" style="left:31px;top:288.5px;" width="72" height="96" viewBox="0 0 72 96"><path d="M5 0 H44.6 L72 26.6 V91 a5 5 0 0 1 -5 5 H5 a5 5 0 0 1 -5 -5 V5 a5 5 0 0 1 5 -5 z" fill="#ecedf6"/><rect x="38.5" y="0" width="6" height="27" fill="url(#fsl)"/><rect x="44.5" y="27" width="27.5" height="5" fill="url(#fsb)"/><path d="M44.5 0 H45.5 L72 25.8 V27 H48.5 a4 4 0 0 1 -4 -4 z" fill="#f2f2fa"/><g transform="translate(0 0) scale(1)"><rect x="15.2" y="31" width="39" height="36" rx="4" fill="#ef5378" transform="rotate(-10 34.5 49.5)"/><path d="M20.7 36 H53.7 a4 4 0 0 1 4 4 V66.5 a4 4 0 0 1 -4 4 H22.7 a4 4 0 0 1 -4 -4 L16.8 40.1 a3.8 3.8 0 0 1 3.9 -4.1 z" fill="url(#fcard)"/><path d="M18.5 63 C23 60.5 27 61 32 63.6 C37 66 42 63 47 62 C51 61.3 54.5 62 57.7 63.5 V66.5 a4 4 0 0 1 -4 4 H22.7 a4 4 0 0 1 -4 -4 z" fill="#ec436c"/><circle cx="24.7" cy="41.3" r="1.1" fill="#f55f83"/><circle cx="51.6" cy="41" r="1.3" fill="#f55f83"/><circle cx="41" cy="62.3" r="1.2" fill="#f45c80"/><text x="38.1" y="57.2" font-family="Liberation Sans, sans-serif" font-weight="700" font-size="14.6" fill="#fff" text-anchor="middle" textLength="27.6" lengthAdjust="spacingAndGlyphs">FITS</text></g></svg>
<svg class="b" style="left:18.6px;top:288.6px;" width="13" height="13" viewBox="0 0 13 13"><rect x="0" y="0" width="13" height="13" rx="3" fill="#1868cf"/><path d="M3.2 6.8 L5.6 9.2 L10 4.4" fill="none" stroke="#fff" stroke-width="1.3" stroke-linecap="round" stroke-linejoin="round"/></svg>
<span class="t" style="left:29.00px;top:386.84px;font-size:12px;color:#fff;letter-spacing:-0.363px;">pp_light_00005</span>
<div class="b" style="left:121px;top:401px;width:105px;height:4px;background:#356a82;"></div>
<div class="b" style="left:121px;top:287px;width:105px;height:115px;background:#636363;box-sizing:border-box;border:1px solid #96c1d9;"></div>
<svg class="b" style="left:137px;top:288.5px;" width="72" height="96" viewBox="0 0 72 96"><path d="M5 0 H44.6 L72 26.6 V91 a5 5 0 0 1 -5 5 H5 a5 5 0 0 1 -5 -5 V5 a5 5 0 0 1 5 -5 z" fill="#ecedf6"/><rect x="38.5" y="0" width="6" height="27" fill="url(#fsl)"/><rect x="44.5" y="27" width="27.5" height="5" fill="url(#fsb)"/><path d="M44.5 0 H45.5 L72 25.8 V27 H48.5 a4 4 0 0 1 -4 -4 z" fill="#f2f2fa"/><g transform="translate(0 0) scale(1)"><rect x="15.2" y="31" width="39" height="36" rx="4" fill="#ef5378" transform="rotate(-10 34.5 49.5)"/><path d="M20.7 36 H53.7 a4 4 0 0 1 4 4 V66.5 a4 4 0 0 1 -4 4 H22.7 a4 4 0 0 1 -4 -4 L16.8 40.1 a3.8 3.8 0 0 1 3.9 -4.1 z" fill="url(#fcard)"/><path d="M18.5 63 C23 60.5 27 61 32 63.6 C37 66 42 63 47 62 C51 61.3 54.5 62 57.7 63.5 V66.5 a4 4 0 0 1 -4 4 H22.7 a4 4 0 0 1 -4 -4 z" fill="#ec436c"/><circle cx="24.7" cy="41.3" r="1.1" fill="#f55f83"/><circle cx="51.6" cy="41" r="1.3" fill="#f55f83"/><circle cx="41" cy="62.3" r="1.2" fill="#f45c80"/><text x="38.1" y="57.2" font-family="Liberation Sans, sans-serif" font-weight="700" font-size="14.6" fill="#fff" text-anchor="middle" textLength="27.6" lengthAdjust="spacingAndGlyphs">FITS</text></g></svg>
<svg class="b" style="left:124.6px;top:288.6px;" width="13" height="13" viewBox="0 0 13 13"><rect x="0" y="0" width="13" height="13" rx="3" fill="#1868cf"/><path d="M3.2 6.8 L5.6 9.2 L10 4.4" fill="none" stroke="#fff" stroke-width="1.3" stroke-linecap="round" stroke-linejoin="round"/></svg>
<span class="t" style="left:135.00px;top:386.84px;font-size:12px;color:#fff;letter-spacing:-0.363px;">pp_light_00006</span>
<div class="b" style="left:227px;top:401px;width:105px;height:4px;background:#356a82;"></div>
<div class="b" style="left:227px;top:287px;width:105px;height:115px;background:#636363;box-sizing:border-box;border:1px solid #96c1d9;"></div>
<svg class="b" style="left:243px;top:288.5px;" width="72" height="96" viewBox="0 0 72 96"><path d="M5 0 H44.6 L72 26.6 V91 a5 5 0 0 1 -5 5 H5 a5 5 0 0 1 -5 -5 V5 a5 5 0 0 1 5 -5 z" fill="#ecedf6"/><rect x="38.5" y="0" width="6" height="27" fill="url(#fsl)"/><rect x="44.5" y="27" width="27.5" height="5" fill="url(#fsb)"/><path d="M44.5 0 H45.5 L72 25.8 V27 H48.5 a4 4 0 0 1 -4 -4 z" fill="#f2f2fa"/><g transform="translate(0 0) scale(1)"><rect x="15.2" y="31" width="39" height="36" rx="4" fill="#ef5378" transform="rotate(-10 34.5 49.5)"/><path d="M20.7 36 H53.7 a4 4 0 0 1 4 4 V66.5 a4 4 0 0 1 -4 4 H22.7 a4 4 0 0 1 -4 -4 L16.8 40.1 a3.8 3.8 0 0 1 3.9 -4.1 z" fill="url(#fcard)"/><path d="M18.5 63 C23 60.5 27 61 32 63.6 C37 66 42 63 47 62 C51 61.3 54.5 62 57.7 63.5 V66.5 a4 4 0 0 1 -4 4 H22.7 a4 4 0 0 1 -4 -4 z" fill="#ec436c"/><circle cx="24.7" cy="41.3" r="1.1" fill="#f55f83"/><circle cx="51.6" cy="41" r="1.3" fill="#f55f83"/><circle cx="41" cy="62.3" r="1.2" fill="#f45c80"/><text x="38.1" y="57.2" font-family="Liberation Sans, sans-serif" font-weight="700" font-size="14.6" fill="#fff" text-anchor="middle" textLength="27.6" lengthAdjust="spacingAndGlyphs">FITS</text></g></svg>
<svg class="b" style="left:230.6px;top:288.6px;" width="13" height="13" viewBox="0 0 13 13"><rect x="0" y="0" width="13" height="13" rx="3" fill="#1868cf"/><path d="M3.2 6.8 L5.6 9.2 L10 4.4" fill="none" stroke="#fff" stroke-width="1.3" stroke-linecap="round" stroke-linejoin="round"/></svg>
<span class="t" style="left:241.00px;top:386.84px;font-size:12px;color:#fff;letter-spacing:-0.363px;">pp_light_00007</span>
<div class="b" style="left:333px;top:401px;width:105px;height:4px;background:#356a82;"></div>
<div class="b" style="left:333px;top:287px;width:105px;height:115px;background:#636363;box-sizing:border-box;border:1px solid #96c1d9;"></div>
<svg class="b" style="left:349px;top:288.5px;" width="72" height="96" viewBox="0 0 72 96"><path d="M5 0 H44.6 L72 26.6 V91 a5 5 0 0 1 -5 5 H5 a5 5 0 0 1 -5 -5 V5 a5 5 0 0 1 5 -5 z" fill="#ecedf6"/><rect x="38.5" y="0" width="6" height="27" fill="url(#fsl)"/><rect x="44.5" y="27" width="27.5" height="5" fill="url(#fsb)"/><path d="M44.5 0 H45.5 L72 25.8 V27 H48.5 a4 4 0 0 1 -4 -4 z" fill="#f2f2fa"/><g transform="translate(0 0) scale(1)"><rect x="15.2" y="31" width="39" height="36" rx="4" fill="#ef5378" transform="rotate(-10 34.5 49.5)"/><path d="M20.7 36 H53.7 a4 4 0 0 1 4 4 V66.5 a4 4 0 0 1 -4 4 H22.7 a4 4 0 0 1 -4 -4 L16.8 40.1 a3.8 3.8 0 0 1 3.9 -4.1 z" fill="url(#fcard)"/><path d="M18.5 63 C23 60.5 27 61 32 63.6 C37 66 42 63 47 62 C51 61.3 54.5 62 57.7 63.5 V66.5 a4 4 0 0 1 -4 4 H22.7 a4 4 0 0 1 -4 -4 z" fill="#ec436c"/><circle cx="24.7" cy="41.3" r="1.1" fill="#f55f83"/><circle cx="51.6" cy="41" r="1.3" fill="#f55f83"/><circle cx="41" cy="62.3" r="1.2" fill="#f45c80"/><text x="38.1" y="57.2" font-family="Liberation Sans, sans-serif" font-weight="700" font-size="14.6" fill="#fff" text-anchor="middle" textLength="27.6" lengthAdjust="spacingAndGlyphs">FITS</text></g></svg>
<svg class="b" style="left:336.6px;top:288.6px;" width="13" height="13" viewBox="0 0 13 13"><rect x="0" y="0" width="13" height="13" rx="3" fill="#1868cf"/><path d="M3.2 6.8 L5.6 9.2 L10 4.4" fill="none" stroke="#fff" stroke-width="1.3" stroke-linecap="round" stroke-linejoin="round"/></svg>
<span class="t" style="left:347.00px;top:386.84px;font-size:12px;color:#fff;letter-spacing:-0.363px;">pp_light_00008</span>
<div class="b" style="left:439px;top:401px;width:105px;height:4px;background:#356a82;"></div>
<div class="b" style="left:439px;top:287px;width:105px;height:115px;background:#636363;box-sizing:border-box;border:1px solid #96c1d9;"></div>
<svg class="b" style="left:455px;top:288.5px;" width="72" height="96" viewBox="0 0 72 96"><path d="M5 0 H44.6 L72 26.6 V91 a5 5 0 0 1 -5 5 H5 a5 5 0 0 1 -5 -5 V5 a5 5 0 0 1 5 -5 z" fill="#ecedf6"/><rect x="38.5" y="0" width="6" height="27" fill="url(#fsl)"/><rect x="44.5" y="27" width="27.5" height="5" fill="url(#fsb)"/><path d="M44.5 0 H45.5 L72 25.8 V27 H48.5 a4 4 0 0 1 -4 -4 z" fill="#f2f2fa"/><g transform="translate(0 0) scale(1)"><rect x="15.2" y="31" width="39" height="36" rx="4" fill="#ef5378" transform="rotate(-10 34.5 49.5)"/><path d="M20.7 36 H53.7 a4 4 0 0 1 4 4 V66.5 a4 4 0 0 1 -4 4 H22.7 a4 4 0 0 1 -4 -4 L16.8 40.1 a3.8 3.8 0 0 1 3.9 -4.1 z" fill="url(#fcard)"/><path d="M18.5 63 C23 60.5 27 61 32 63.6 C37 66 42 63 47 62 C51 61.3 54.5 62 57.7 63.5 V66.5 a4 4 0 0 1 -4 4 H22.7 a4 4 0 0 1 -4 -4 z" fill="#ec436c"/><circle cx="24.7" cy="41.3" r="1.1" fill="#f55f83"/><circle cx="51.6" cy="41" r="1.3" fill="#f55f83"/><circle cx="41" cy="62.3" r="1.2" fill="#f45c80"/><text x="38.1" y="57.2" font-family="Liberation Sans, sans-serif" font-weight="700" font-size="14.6" fill="#fff" text-anchor="middle" textLength="27.6" lengthAdjust="spacingAndGlyphs">FITS</text></g></svg>
<svg class="b" style="left:442.6px;top:288.6px;" width="13" height="13" viewBox="0 0 13 13"><rect x="0" y="0" width="13" height="13" rx="3" fill="#1868cf"/><path d="M3.2 6.8 L5.6 9.2 L10 4.4" fill="none" stroke="#fff" stroke-width="1.3" stroke-linecap="round" stroke-linejoin="round"/></svg>
<span class="t" style="left:453.00px;top:386.84px;font-size:12px;color:#fff;letter-spacing:-0.363px;">pp_light_00009</span>
<div class="b" style="left:545px;top:401px;width:105px;height:4px;background:#356a82;"></div>
<div class="b" style="left:545px;top:287px;width:105px;height:115px;background:#636363;box-sizing:border-box;border:1px solid #96c1d9;"></div>
<svg class="b" style="left:561px;top:288.5px;" width="72" height="96" viewBox="0 0 72 96"><path d="M5 0 H44.6 L72 26.6 V91 a5 5 0 0 1 -5 5 H5 a5 5 0 0 1 -5 -5 V5 a5 5 0 0 1 5 -5 z" fill="#ecedf6"/><rect x="38.5" y="0" width="6" height="27" fill="url(#fsl)"/><rect x="44.5" y="27" width="27.5" height="5" fill="url(#fsb)"/><path d="M44.5 0 H45.5 L72 25.8 V27 H48.5 a4 4 0 0 1 -4 -4 z" fill="#f2f2fa"/><g transform="translate(0 0) scale(1)"><rect x="15.2" y="31" width="39" height="36" rx="4" fill="#ef5378" transform="rotate(-10 34.5 49.5)"/><path d="M20.7 36 H53.7 a4 4 0 0 1 4 4 V66.5 a4 4 0 0 1 -4 4 H22.7 a4 4 0 0 1 -4 -4 L16.8 40.1 a3.8 3.8 0 0 1 3.9 -4.1 z" fill="url(#fcard)"/><path d="M18.5 63 C23 60.5 27 61 32 63.6 C37 66 42 63 47 62 C51 61.3 54.5 62 57.7 63.5 V66.5 a4 4 0 0 1 -4 4 H22.7 a4 4 0 0 1 -4 -4 z" fill="#ec436c"/><circle cx="24.7" cy="41.3" r="1.1" fill="#f55f83"/><circle cx="51.6" cy="41" r="1.3" fill="#f55f83"/><circle cx="41" cy="62.3" r="1.2" fill="#f45c80"/><text x="38.1" y="57.2" font-family="Liberation Sans, sans-serif" font-weight="700" font-size="14.6" fill="#fff" text-anchor="middle" textLength="27.6" lengthAdjust="spacingAndGlyphs">FITS</text></g></svg>
<svg class="b" style="left:548.6px;top:288.6px;" width="13" height="13" viewBox="0 0 13 13"><rect x="0" y="0" width="13" height="13" rx="3" fill="#1868cf"/><path d="M3.2 6.8 L5.6 9.2 L10 4.4" fill="none" stroke="#fff" stroke-width="1.3" stroke-linecap="round" stroke-linejoin="round"/></svg>
<span class="t" style="left:559.00px;top:386.84px;font-size:12px;color:#fff;letter-spacing:-0.363px;">pp_light_00010</span>
<div class="b" style="left:15px;top:518px;width:105px;height:4px;background:#356a82;"></div>
<div class="b" style="left:15px;top:404px;width:105px;height:115px;background:#636363;box-sizing:border-box;border:1px solid #96c1d9;"></div>
<svg class="b" style="left:31px;top:405.5px;" width="72" height="96" viewBox="0 0 72 96"><path d="M5 0 H44.6 L72 26.6 V91 a5 5 0 0 1 -5 5 H5 a5 5 0 0 1 -5 -5 V5 a5 5 0 0 1 5 -5 z" fill="#ecedf6"/><rect x="38.5" y="0" width="6" height="27" fill="url(#fsl)"/><rect x="44.5" y="27" width="27.5" height="5" fill="url(#fsb)"/><path d="M44.5 0 H45.5 L72 25.8 V27 H48.5 a4 4 0 0 1 -4 -4 z" fill="#f2f2fa"/><g transform="translate(0 0) scale(1)"><rect x="15.2" y="31" width="39" height="36" rx="4" fill="#ef5378" transform="rotate(-10 34.5 49.5)"/><path d="M20.7 36 H53.7 a4 4 0 0 1 4 4 V66.5 a4 4 0 0 1 -4 4 H22.7 a4 4 0 0 1 -4 -4 L16.8 40.1 a3.8 3.8 0 0 1 3.9 -4.1 z" fill="url(#fcard)"/><path d="M18.5 63 C23 60.5 27 61 32 63.6 C37 66 42 63 47 62 C51 61.3 54.5 62 57.7 63.5 V66.5 a4 4 0 0 1 -4 4 H22.7 a4 4 0 0 1 -4 -4 z" fill="#ec436c"/><circle cx="24.7" cy="41.3" r="1.1" fill="#f55f83"/><circle cx="51.6" cy="41" r="1.3" fill="#f55f83"/><circle cx="41" cy="62.3" r="1.2" fill="#f45c80"/><text x="38.1" y="57.2" font-family="Liberation Sans, sans-serif" font-weight="700" font-size="14.6" fill="#fff" text-anchor="middle" textLength="27.6" lengthAdjust="spacingAndGlyphs">FITS</text></g></svg>
<svg class="b" style="left:18.6px;top:405.6px;" width="13" height="13" viewBox="0 0 13 13"><rect x="0" y="0" width="13" height="13" rx="3" fill="#1868cf"/><path d="M3.2 6.8 L5.6 9.2 L10 4.4" fill="none" stroke="#fff" stroke-width="1.3" stroke-linecap="round" stroke-linejoin="round"/></svg>
<span class="t" style="left:29.00px;top:503.84px;font-size:12px;color:#fff;letter-spacing:-0.299px;">pp_light_00011</span>
<div class="b" style="left:121px;top:518px;width:105px;height:4px;background:#356a82;"></div>
<div class="b" style="left:121px;top:404px;width:105px;height:115px;background:#636363;box-sizing:border-box;border:1px solid #96c1d9;"></div>
<svg class="b" style="left:137px;top:405.5px;" width="72" height="96" viewBox="0 0 72 96"><path d="M5 0 H44.6 L72 26.6 V91 a5 5 0 0 1 -5 5 H5 a5 5 0 0 1 -5 -5 V5 a5 5 0 0 1 5 -5 z" fill="#ecedf6"/><rect x="38.5" y="0" width="6" height="27" fill="url(#fsl)"/><rect x="44.5" y="27" width="27.5" height="5" fill="url(#fsb)"/><path d="M44.5 0 H45.5 L72 25.8 V27 H48.5 a4 4 0 0 1 -4 -4 z" fill="#f2f2fa"/><g transform="translate(0 0) scale(1)"><rect x="15.2" y="31" width="39" height="36" rx="4" fill="#ef5378" transform="rotate(-10 34.5 49.5)"/><path d="M20.7 36 H53.7 a4 4 0 0 1 4 4 V66.5 a4 4 0 0 1 -4 4 H22.7 a4 4 0 0 1 -4 -4 L16.8 40.1 a3.8 3.8 0 0 1 3.9 -4.1 z" fill="url(#fcard)"/><path d="M18.5 63 C23 60.5 27 61 32 63.6 C37 66 42 63 47 62 C51 61.3 54.5 62 57.7 63.5 V66.5 a4 4 0 0 1 -4 4 H22.7 a4 4 0 0 1 -4 -4 z" fill="#ec436c"/><circle cx="24.7" cy="41.3" r="1.1" fill="#f55f83"/><circle cx="51.6" cy="41" r="1.3" fill="#f55f83"/><circle cx="41" cy="62.3" r="1.2" fill="#f45c80"/><text x="38.1" y="57.2" font-family="Liberation Sans, sans-serif" font-weight="700" font-size="14.6" fill="#fff" text-anchor="middle" textLength="27.6" lengthAdjust="spacingAndGlyphs">FITS</text></g></svg>
<svg class="b" style="left:124.6px;top:405.6px;" width="13" height="13" viewBox="0 0 13 13"><rect x="0" y="0" width="13" height="13" rx="3" fill="#1868cf"/><path d="M3.2 6.8 L5.6 9.2 L10 4.4" fill="none" stroke="#fff" stroke-width="1.3" stroke-linecap="round" stroke-linejoin="round"/></svg>
<span class="t" style="left:135.00px;top:503.84px;font-size:12px;color:#fff;letter-spacing:-0.363px;">pp_light_00012</span>
<div class="b" style="left:227px;top:518px;width:105px;height:4px;background:#356a82;"></div>
<div class="b" style="left:227px;top:404px;width:105px;height:115px;background:#636363;box-sizing:border-box;border:1px solid #96c1d9;"></div>
<svg class="b" style="left:243px;top:405.5px;" width="72" height="96" viewBox="0 0 72 96"><path d="M5 0 H44.6 L72 26.6 V91 a5 5 0 0 1 -5 5 H5 a5 5 0 0 1 -5 -5 V5 a5 5 0 0 1 5 -5 z" fill="#ecedf6"/><rect x="38.5" y="0" width="6" height="27" fill="url(#fsl)"/><rect x="44.5" y="27" width="27.5" height="5" fill="url(#fsb)"/><path d="M44.5 0 H45.5 L72 25.8 V27 H48.5 a4 4 0 0 1 -4 -4 z" fill="#f2f2fa"/><g transform="translate(0 0) scale(1)"><rect x="15.2" y="31" width="39" height="36" rx="4" fill="#ef5378" transform="rotate(-10 34.5 49.5)"/><path d="M20.7 36 H53.7 a4 4 0 0 1 4 4 V66.5 a4 4 0 0 1 -4 4 H22.7 a4 4 0 0 1 -4 -4 L16.8 40.1 a3.8 3.8 0 0 1 3.9 -4.1 z" fill="url(#fcard)"/><path d="M18.5 63 C23 60.5 27 61 32 63.6 C37 66 42 63 47 62 C51 61.3 54.5 62 57.7 63.5 V66.5 a4 4 0 0 1 -4 4 H22.7 a4 4 0 0 1 -4 -4 z" fill="#ec436c"/><circle cx="24.7" cy="41.3" r="1.1" fill="#f55f83"/><circle cx="51.6" cy="41" r="1.3" fill="#f55f83"/><circle cx="41" cy="62.3" r="1.2" fill="#f45c80"/><text x="38.1" y="57.2" font-family="Liberation Sans, sans-serif" font-weight="700" font-size="14.6" fill="#fff" text-anchor="middle" textLength="27.6" lengthAdjust="spacingAndGlyphs">FITS</text></g></svg>
<svg class="b" style="left:230.6px;top:405.6px;" width="13" height="13" viewBox="0 0 13 13"><rect x="0" y="0" width="13" height="13" rx="3" fill="#1868cf"/><path d="M3.2 6.8 L5.6 9.2 L10 4.4" fill="none" stroke="#fff" stroke-width="1.3" stroke-linecap="round" stroke-linejoin="round"/></svg>
<span class="t" style="left:241.00px;top:503.84px;font-size:12px;color:#fff;letter-spacing:-0.363px;">pp_light_00013</span>
<div class="b" style="left:333px;top:518px;width:105px;height:4px;background:#356a82;"></div>
<div class="b" style="left:333px;top:404px;width:105px;height:115px;background:#636363;box-sizing:border-box;border:1px solid #96c1d9;"></div>
<svg class="b" style="left:349px;top:405.5px;" width="72" height="96" viewBox="0 0 72 96"><path d="M5 0 H44.6 L72 26.6 V91 a5 5 0 0 1 -5 5 H5 a5 5 0 0 1 -5 -5 V5 a5 5 0 0 1 5 -5 z" fill="#ecedf6"/><rect x="38.5" y="0" width="6" height="27" fill="url(#fsl)"/><rect x="44.5" y="27" width="27.5" height="5" fill="url(#fsb)"/><path d="M44.5 0 H45.5 L72 25.8 V27 H48.5 a4 4 0 0 1 -4 -4 z" fill="#f2f2fa"/><g transform="translate(0 0) scale(1)"><rect x="15.2" y="31" width="39" height="36" rx="4" fill="#ef5378" transform="rotate(-10 34.5 49.5)"/><path d="M20.7 36 H53.7 a4 4 0 0 1 4 4 V66.5 a4 4 0 0 1 -4 4 H22.7 a4 4 0 0 1 -4 -4 L16.8 40.1 a3.8 3.8 0 0 1 3.9 -4.1 z" fill="url(#fcard)"/><path d="M18.5 63 C23 60.5 27 61 32 63.6 C37 66 42 63 47 62 C51 61.3 54.5 62 57.7 63.5 V66.5 a4 4 0 0 1 -4 4 H22.7 a4 4 0 0 1 -4 -4 z" fill="#ec436c"/><circle cx="24.7" cy="41.3" r="1.1" fill="#f55f83"/><circle cx="51.6" cy="41" r="1.3" fill="#f55f83"/><circle cx="41" cy="62.3" r="1.2" fill="#f45c80"/><text x="38.1" y="57.2" font-family="Liberation Sans, sans-serif" font-weight="700" font-size="14.6" fill="#fff" text-anchor="middle" textLength="27.6" lengthAdjust="spacingAndGlyphs">FITS</text></g></svg>
<svg class="b" style="left:336.6px;top:405.6px;" width="13" height="13" viewBox="0 0 13 13"><rect x="0" y="0" width="13" height="13" rx="3" fill="#1868cf"/><path d="M3.2 6.8 L5.6 9.2 L10 4.4" fill="none" stroke="#fff" stroke-width="1.3" stroke-linecap="round" stroke-linejoin="round"/></svg>
<span class="t" style="left:347.00px;top:503.84px;font-size:12px;color:#fff;letter-spacing:-0.363px;">pp_light_00014</span>
<div class="b" style="left:439px;top:518px;width:105px;height:4px;background:#356a82;"></div>
<div class="b" style="left:439px;top:404px;width:105px;height:115px;background:#636363;box-sizing:border-box;border:1px solid #96c1d9;"></div>
<svg class="b" style="left:455px;top:405.5px;" width="72" height="96" viewBox="0 0 72 96"><path d="M5 0 H44.6 L72 26.6 V91 a5 5 0 0 1 -5 5 H5 a5 5 0 0 1 -5 -5 V5 a5 5 0 0 1 5 -5 z" fill="#ecedf6"/><rect x="38.5" y="0" width="6" height="27" fill="url(#fsl)"/><rect x="44.5" y="27" width="27.5" height="5" fill="url(#fsb)"/><path d="M44.5 0 H45.5 L72 25.8 V27 H48.5 a4 4 0 0 1 -4 -4 z" fill="#f2f2fa"/><g transform="translate(0 0) scale(1)"><rect x="15.2" y="31" width="39" height="36" rx="4" fill="#ef5378" transform="rotate(-10 34.5 49.5)"/><path d="M20.7 36 H53.7 a4 4 0 0 1 4 4 V66.5 a4 4 0 0 1 -4 4 H22.7 a4 4 0 0 1 -4 -4 L16.8 40.1 a3.8 3.8 0 0 1 3.9 -4.1 z" fill="url(#fcard)"/><path d="M18.5 63 C23 60.5 27 61 32 63.6 C37 66 42 63 47 62 C51 61.3 54.5 62 57.7 63.5 V66.5 a4 4 0 0 1 -4 4 H22.7 a4 4 0 0 1 -4 -4 z" fill="#ec436c"/><circle cx="24.7" cy="41.3" r="1.1" fill="#f55f83"/><circle cx="51.6" cy="41" r="1.3" fill="#f55f83"/><circle cx="41" cy="62.3" r="1.2" fill="#f45c80"/><text x="38.1" y="57.2" font-family="Liberation Sans, sans-serif" font-weight="700" font-size="14.6" fill="#fff" text-anchor="middle" textLength="27.6" lengthAdjust="spacingAndGlyphs">FITS</text></g></svg>
<svg class="b" style="left:442.6px;top:405.6px;" width="13" height="13" viewBox="0 0 13 13"><rect x="0" y="0" width="13" height="13" rx="3" fill="#1868cf"/><path d="M3.2 6.8 L5.6 9.2 L10 4.4" fill="none" stroke="#fff" stroke-width="1.3" stroke-linecap="round" stroke-linejoin="round"/></svg>
<span class="t" style="left:453.00px;top:503.84px;font-size:12px;color:#fff;letter-spacing:-0.363px;">pp_light_00015</span>
<div class="b" style="left:545px;top:404px;width:105px;height:115px;background:#636363;box-sizing:border-box;border:1px solid #96c1d9;"></div>
<svg class="b" style="left:561px;top:405.5px;" width="72" height="96" viewBox="0 0 72 96"><path d="M5 0 H44.6 L72 26.6 V91 a5 5 0 0 1 -5 5 H5 a5 5 0 0 1 -5 -5 V5 a5 5 0 0 1 5 -5 z" fill="#ecedf6"/><rect x="38.5" y="0" width="6" height="27" fill="url(#fsl)"/><rect x="44.5" y="27" width="27.5" height="5" fill="url(#fsb)"/><path d="M44.5 0 H45.5 L72 25.8 V27 H48.5 a4 4 0 0 1 -4 -4 z" fill="#f2f2fa"/><g transform="translate(0 0) scale(1)"><rect x="15.2" y="31" width="39" height="36" rx="4" fill="#ef5378" transform="rotate(-10 34.5 49.5)"/><path d="M20.7 36 H53.7 a4 4 0 0 1 4 4 V66.5 a4 4 0 0 1 -4 4 H22.7 a4 4 0 0 1 -4 -4 L16.8 40.1 a3.8 3.8 0 0 1 3.9 -4.1 z" fill="url(#fcard)"/><path d="M18.5 63 C23 60.5 27 61 32 63.6 C37 66 42 63 47 62 C51 61.3 54.5 62 57.7 63.5 V66.5 a4 4 0 0 1 -4 4 H22.7 a4 4 0 0 1 -4 -4 z" fill="#ec436c"/><circle cx="24.7" cy="41.3" r="1.1" fill="#f55f83"/><circle cx="51.6" cy="41" r="1.3" fill="#f55f83"/><circle cx="41" cy="62.3" r="1.2" fill="#f45c80"/><text x="38.1" y="57.2" font-family="Liberation Sans, sans-serif" font-weight="700" font-size="14.6" fill="#fff" text-anchor="middle" textLength="27.6" lengthAdjust="spacingAndGlyphs">FITS</text></g></svg>
<svg class="b" style="left:548.6px;top:405.6px;" width="13" height="13" viewBox="0 0 13 13"><rect x="0" y="0" width="13" height="13" rx="3" fill="#1868cf"/><path d="M3.2 6.8 L5.6 9.2 L10 4.4" fill="none" stroke="#fff" stroke-width="1.3" stroke-linecap="round" stroke-linejoin="round"/></svg>
<span class="t" style="left:559.00px;top:503.84px;font-size:12px;color:#fff;letter-spacing:-0.363px;">pp_light_00016</span>
<div class="b" style="left:15px;top:521px;width:105px;height:115px;background:#636363;box-sizing:border-box;border:1px solid #96c1d9;"></div>
<svg class="b" style="left:31px;top:522.5px;" width="72" height="96" viewBox="0 0 72 96"><path d="M5 0 H44.6 L72 26.6 V91 a5 5 0 0 1 -5 5 H5 a5 5 0 0 1 -5 -5 V5 a5 5 0 0 1 5 -5 z" fill="#ecedf6"/><rect x="38.5" y="0" width="6" height="27" fill="url(#fsl)"/><rect x="44.5" y="27" width="27.5" height="5" fill="url(#fsb)"/><path d="M44.5 0 H45.5 L72 25.8 V27 H48.5 a4 4 0 0 1 -4 -4 z" fill="#f2f2fa"/><g transform="translate(0 0) scale(1)"><rect x="15.2" y="31" width="39" height="36" rx="4" fill="#ef5378" transform="rotate(-10 34.5 49.5)"/><path d="M20.7 36 H53.7 a4 4 0 0 1 4 4 V66.5 a4 4 0 0 1 -4 4 H22.7 a4 4 0 0 1 -4 -4 L16.8 40.1 a3.8 3.8 0 0 1 3.9 -4.1 z" fill="url(#fcard)"/><path d="M18.5 63 C23 60.5 27 61 32 63.6 C37 66 42 63 47 62 C51 61.3 54.5 62 57.7 63.5 V66.5 a4 4 0 0 1 -4 4 H22.7 a4 4 0 0 1 -4 -4 z" fill="#ec436c"/><circle cx="24.7" cy="41.3" r="1.1" fill="#f55f83"/><circle cx="51.6" cy="41" r="1.3" fill="#f55f83"/><circle cx="41" cy="62.3" r="1.2" fill="#f45c80"/><text x="38.1" y="57.2" font-family="Liberation Sans, sans-serif" font-weight="700" font-size="14.6" fill="#fff" text-anchor="middle" textLength="27.6" lengthAdjust="spacingAndGlyphs">FITS</text></g></svg>
<svg class="b" style="left:18.6px;top:522.6px;" width="13" height="13" viewBox="0 0 13 13"><rect x="0" y="0" width="13" height="13" rx="3" fill="#1868cf"/><path d="M3.2 6.8 L5.6 9.2 L10 4.4" fill="none" stroke="#fff" stroke-width="1.3" stroke-linecap="round" stroke-linejoin="round"/></svg>
<span class="t" style="left:29.00px;top:620.84px;font-size:12px;color:#fff;letter-spacing:-0.363px;">pp_light_00017</span>
<div class="b" style="left:121px;top:521px;width:105px;height:115px;background:#636363;box-sizing:border-box;border:1px solid #96c1d9;"></div>
<svg class="b" style="left:137px;top:522.5px;" width="72" height="96" viewBox="0 0 72 96"><path d="M5 0 H44.6 L72 26.6 V91 a5 5 0 0 1 -5 5 H5 a5 5 0 0 1 -5 -5 V5 a5 5 0 0 1 5 -5 z" fill="#ecedf6"/><rect x="38.5" y="0" width="6" height="27" fill="url(#fsl)"/><rect x="44.5" y="27" width="27.5" height="5" fill="url(#fsb)"/><path d="M44.5 0 H45.5 L72 25.8 V27 H48.5 a4 4 0 0 1 -4 -4 z" fill="#f2f2fa"/><g transform="translate(0 0) scale(1)"><rect x="15.2" y="31" width="39" height="36" rx="4" fill="#ef5378" transform="rotate(-10 34.5 49.5)"/><path d="M20.7 36 H53.7 a4 4 0 0 1 4 4 V66.5 a4 4 0 0 1 -4 4 H22.7 a4 4 0 0 1 -4 -4 L16.8 40.1 a3.8 3.8 0 0 1 3.9 -4.1 z" fill="url(#fcard)"/><path d="M18.5 63 C23 60.5 27 61 32 63.6 C37 66 42 63 47 62 C51 61.3 54.5 62 57.7 63.5 V66.5 a4 4 0 0 1 -4 4 H22.7 a4 4 0 0 1 -4 -4 z" fill="#ec436c"/><circle cx="24.7" cy="41.3" r="1.1" fill="#f55f83"/><circle cx="51.6" cy="41" r="1.3" fill="#f55f83"/><circle cx="41" cy="62.3" r="1.2" fill="#f45c80"/><text x="38.1" y="57.2" font-family="Liberation Sans, sans-serif" font-weight="700" font-size="14.6" fill="#fff" text-anchor="middle" textLength="27.6" lengthAdjust="spacingAndGlyphs">FITS</text></g></svg>
<svg class="b" style="left:124.6px;top:522.6px;" width="13" height="13" viewBox="0 0 13 13"><rect x="0" y="0" width="13" height="13" rx="3" fill="#1868cf"/><path d="M3.2 6.8 L5.6 9.2 L10 4.4" fill="none" stroke="#fff" stroke-width="1.3" stroke-linecap="round" stroke-linejoin="round"/></svg>
<span class="t" style="left:135.00px;top:620.84px;font-size:12px;color:#fff;letter-spacing:-0.363px;">pp_light_00018</span>
<div class="b" style="left:227px;top:521px;width:105px;height:115px;background:#636363;box-sizing:border-box;border:1px solid #96c1d9;"></div>
<svg class="b" style="left:243px;top:522.5px;" width="72" height="96" viewBox="0 0 72 96"><path d="M5 0 H44.6 L72 26.6 V91 a5 5 0 0 1 -5 5 H5 a5 5 0 0 1 -5 -5 V5 a5 5 0 0 1 5 -5 z" fill="#ecedf6"/><rect x="38.5" y="0" width="6" height="27" fill="url(#fsl)"/><rect x="44.5" y="27" width="27.5" height="5" fill="url(#fsb)"/><path d="M44.5 0 H45.5 L72 25.8 V27 H48.5 a4 4 0 0 1 -4 -4 z" fill="#f2f2fa"/><g transform="translate(0 0) scale(1)"><rect x="15.2" y="31" width="39" height="36" rx="4" fill="#ef5378" transform="rotate(-10 34.5 49.5)"/><path d="M20.7 36 H53.7 a4 4 0 0 1 4 4 V66.5 a4 4 0 0 1 -4 4 H22.7 a4 4 0 0 1 -4 -4 L16.8 40.1 a3.8 3.8 0 0 1 3.9 -4.1 z" fill="url(#fcard)"/><path d="M18.5 63 C23 60.5 27 61 32 63.6 C37 66 42 63 47 62 C51 61.3 54.5 62 57.7 63.5 V66.5 a4 4 0 0 1 -4 4 H22.7 a4 4 0 0 1 -4 -4 z" fill="#ec436c"/><circle cx="24.7" cy="41.3" r="1.1" fill="#f55f83"/><circle cx="51.6" cy="41" r="1.3" fill="#f55f83"/><circle cx="41" cy="62.3" r="1.2" fill="#f45c80"/><text x="38.1" y="57.2" font-family="Liberation Sans, sans-serif" font-weight="700" font-size="14.6" fill="#fff" text-anchor="middle" textLength="27.6" lengthAdjust="spacingAndGlyphs">FITS</text></g></svg>
<svg class="b" style="left:230.6px;top:522.6px;" width="13" height="13" viewBox="0 0 13 13"><rect x="0" y="0" width="13" height="13" rx="3" fill="#1868cf"/><path d="M3.2 6.8 L5.6 9.2 L10 4.4" fill="none" stroke="#fff" stroke-width="1.3" stroke-linecap="round" stroke-linejoin="round"/></svg>
<span class="t" style="left:241.00px;top:620.84px;font-size:12px;color:#fff;letter-spacing:-0.363px;">pp_light_00019</span>
<div class="b" style="left:333px;top:521px;width:105px;height:115px;background:#636363;box-sizing:border-box;border:1px solid #96c1d9;"></div>
<svg class="b" style="left:349px;top:522.5px;" width="72" height="96" viewBox="0 0 72 96"><path d="M5 0 H44.6 L72 26.6 V91 a5 5 0 0 1 -5 5 H5 a5 5 0 0 1 -5 -5 V5 a5 5 0 0 1 5 -5 z" fill="#ecedf6"/><rect x="38.5" y="0" width="6" height="27" fill="url(#fsl)"/><rect x="44.5" y="27" width="27.5" height="5" fill="url(#fsb)"/><path d="M44.5 0 H45.5 L72 25.8 V27 H48.5 a4 4 0 0 1 -4 -4 z" fill="#f2f2fa"/><g transform="translate(0 0) scale(1)"><rect x="15.2" y="31" width="39" height="36" rx="4" fill="#ef5378" transform="rotate(-10 34.5 49.5)"/><path d="M20.7 36 H53.7 a4 4 0 0 1 4 4 V66.5 a4 4 0 0 1 -4 4 H22.7 a4 4 0 0 1 -4 -4 L16.8 40.1 a3.8 3.8 0 0 1 3.9 -4.1 z" fill="url(#fcard)"/><path d="M18.5 63 C23 60.5 27 61 32 63.6 C37 66 42 63 47 62 C51 61.3 54.5 62 57.7 63.5 V66.5 a4 4 0 0 1 -4 4 H22.7 a4 4 0 0 1 -4 -4 z" fill="#ec436c"/><circle cx="24.7" cy="41.3" r="1.1" fill="#f55f83"/><circle cx="51.6" cy="41" r="1.3" fill="#f55f83"/><circle cx="41" cy="62.3" r="1.2" fill="#f45c80"/><text x="38.1" y="57.2" font-family="Liberation Sans, sans-serif" font-weight="700" font-size="14.6" fill="#fff" text-anchor="middle" textLength="27.6" lengthAdjust="spacingAndGlyphs">FITS</text></g></svg>
<svg class="b" style="left:336.6px;top:522.6px;" width="13" height="13" viewBox="0 0 13 13"><rect x="0" y="0" width="13" height="13" rx="3" fill="#1868cf"/><path d="M3.2 6.8 L5.6 9.2 L10 4.4" fill="none" stroke="#fff" stroke-width="1.3" stroke-linecap="round" stroke-linejoin="round"/></svg>
<span class="t" style="left:347.00px;top:620.84px;font-size:12px;color:#fff;letter-spacing:-0.363px;">pp_light_00020</span>
<div class="b" style="left:439px;top:521px;width:105px;height:115px;background:#636363;box-sizing:border-box;border:1px solid #96c1d9;"></div>
<svg class="b" style="left:455px;top:522.5px;" width="72" height="96" viewBox="0 0 72 96"><path d="M5 0 H44.6 L72 26.6 V91 a5 5 0 0 1 -5 5 H5 a5 5 0 0 1 -5 -5 V5 a5 5 0 0 1 5 -5 z" fill="#ecedf6"/><rect x="38.5" y="0" width="6" height="27" fill="url(#fsl)"/><rect x="44.5" y="27" width="27.5" height="5" fill="url(#fsb)"/><path d="M44.5 0 H45.5 L72 25.8 V27 H48.5 a4 4 0 0 1 -4 -4 z" fill="#f2f2fa"/><g transform="translate(0 0) scale(1)"><rect x="15.2" y="31" width="39" height="36" rx="4" fill="#ef5378" transform="rotate(-10 34.5 49.5)"/><path d="M20.7 36 H53.7 a4 4 0 0 1 4 4 V66.5 a4 4 0 0 1 -4 4 H22.7 a4 4 0 0 1 -4 -4 L16.8 40.1 a3.8 3.8 0 0 1 3.9 -4.1 z" fill="url(#fcard)"/><path d="M18.5 63 C23 60.5 27 61 32 63.6 C37 66 42 63 47 62 C51 61.3 54.5 62 57.7 63.5 V66.5 a4 4 0 0 1 -4 4 H22.7 a4 4 0 0 1 -4 -4 z" fill="#ec436c"/><circle cx="24.7" cy="41.3" r="1.1" fill="#f55f83"/><circle cx="51.6" cy="41" r="1.3" fill="#f55f83"/><circle cx="41" cy="62.3" r="1.2" fill="#f45c80"/><text x="38.1" y="57.2" font-family="Liberation Sans, sans-serif" font-weight="700" font-size="14.6" fill="#fff" text-anchor="middle" textLength="27.6" lengthAdjust="spacingAndGlyphs">FITS</text></g></svg>
<svg class="b" style="left:442.6px;top:522.6px;" width="13" height="13" viewBox="0 0 13 13"><rect x="0" y="0" width="13" height="13" rx="3" fill="#1868cf"/><path d="M3.2 6.8 L5.6 9.2 L10 4.4" fill="none" stroke="#fff" stroke-width="1.3" stroke-linecap="round" stroke-linejoin="round"/></svg>
<span class="t" style="left:453.00px;top:620.84px;font-size:12px;color:#fff;letter-spacing:-0.363px;">pp_light_00021</span>
<svg class="b" style="left:564px;top:528.5px;" width="66" height="84" viewBox="0 0 66 84"><path d="M4.5 0 H44 L66 20.5 V79.5 a4.5 4.5 0 0 1 -4.5 4.5 H4.5 a4.5 4.5 0 0 1 -4.5 -4.5 V4.5 a4.5 4.5 0 0 1 4.5 -4.5 z" fill="#f6f4f1"/><path d="M44 0 L66 20.5 H47.5 a3.5 3.5 0 0 1 -3.5 -3.5 z" fill="#dcdad5"/><circle cx="33" cy="46" r="21.4" fill="url(#sir)"/><g transform="translate(33 46) scale(1)" fill="none" stroke="#d8d2f4" stroke-width="1.7" stroke-linecap="round" stroke-linejoin="round"><path d="M2.23 -0.90 L2.67 -0.63 L3.02 -0.24 L3.30 0.25 L3.49 0.81 L3.57 1.43 L3.54 2.08 L3.37 2.76 L3.08 3.42 L2.66 4.06 L2.11 4.64 L1.45 5.14 L0.68 5.54 L-0.18 5.82 L-1.10 5.95 L-2.07 5.94 L-3.06 5.76 L-4.04 5.41 L-4.98 4.89 L-5.85 4.21 L-6.63 3.38 L-7.28 2.40 L-7.78 1.30 L-8.11 0.11 L-8.25 -1.16 L-8.19 -2.47 L-7.92 -3.78 L-7.44 -5.06 L-6.74 -6.29 L-5.84 -7.41 L-4.75 -8.40 L-3.50 -9.23 L-2.10 -9.87 L-0.58 -10.29 L1.01 -10.47 L2.64 -10.41 L4.28 -10.08 L5.87 -9.49 L7.39 -8.65 L8.78 -7.56 L10.01 -6.25"/><path d="M-2.19 0.98 L-2.66 0.73 L-3.05 0.35 L-3.37 -0.13 L-3.59 -0.70 L-3.71 -1.33 L-3.70 -2.01 L-3.57 -2.71 L-3.30 -3.42 L-2.89 -4.09 L-2.35 -4.72 L-1.69 -5.27 L-0.90 -5.71 L-0.03 -6.04 L0.93 -6.22 L1.94 -6.24 L2.97 -6.10 L4.01 -5.78 L5.01 -5.28 L5.94 -4.60 L6.79 -3.76 L7.50 -2.77 L8.07 -1.64 L8.47 -0.41 L8.67 0.91 L8.66 2.28 L8.42 3.66 L7.97 5.03 L7.29 6.33 L6.39 7.55 L5.29 8.63 L4.00 9.54 L2.56 10.27 L0.99 10.76 L-0.67 11.02 L-2.39 11.01 L-4.12 10.73 L-5.82 10.18 L-7.44 9.35 L-8.94 8.26 L-10.28 6.93"/></g><g fill="#cfd6fb" transform="translate(33 46) scale(1)"><circle cx="-10" cy="-13" r="1.3"/><circle cx="1.5" cy="-14.5" r="0.8"/><circle cx="18.5" cy="-3.5" r="0.8"/><circle cx="-15.5" cy="2" r="0.8"/><circle cx="11.5" cy="8" r="0.8"/><circle cx="-3" cy="16.5" r="1.4"/></g></svg>
<span class="t" style="left:569.50px;top:620.84px;font-size:12px;color:#fff;letter-spacing:-0.307px;">r_pp_light_</span>
<svg class="b" style="left:31px;top:639.5px;" width="72" height="96" viewBox="0 0 72 96"><path d="M5 0 H44.6 L72 26.6 V91 a5 5 0 0 1 -5 5 H5 a5 5 0 0 1 -5 -5 V5 a5 5 0 0 1 5 -5 z" fill="#ecedf6"/><rect x="38.5" y="0" width="6" height="27" fill="url(#fsl)"/><rect x="44.5" y="27" width="27.5" height="5" fill="url(#fsb)"/><path d="M44.5 0 H45.5 L72 25.8 V27 H48.5 a4 4 0 0 1 -4 -4 z" fill="#f2f2fa"/><g transform="translate(0 0) scale(1)"><rect x="15.2" y="31" width="39" height="36" rx="4" fill="#ef5378" transform="rotate(-10 34.5 49.5)"/><path d="M20.7 36 H53.7 a4 4 0 0 1 4 4 V66.5 a4 4 0 0 1 -4 4 H22.7 a4 4 0 0 1 -4 -4 L16.8 40.1 a3.8 3.8 0 0 1 3.9 -4.1 z" fill="url(#fcard)"/><path d="M18.5 63 C23 60.5 27 61 32 63.6 C37 66 42 63 47 62 C51 61.3 54.5 62 57.7 63.5 V66.5 a4 4 0 0 1 -4 4 H22.7 a4 4 0 0 1 -4 -4 z" fill="#ec436c"/><circle cx="24.7" cy="41.3" r="1.1" fill="#f55f83"/><circle cx="51.6" cy="41" r="1.3" fill="#f55f83"/><circle cx="41" cy="62.3" r="1.2" fill="#f45c80"/><text x="38.1" y="57.2" font-family="Liberation Sans, sans-serif" font-weight="700" font-size="14.6" fill="#fff" text-anchor="middle" textLength="27.6" lengthAdjust="spacingAndGlyphs">FITS</text></g></svg>
<span class="t" style="left:24.25px;top:737.84px;font-size:12px;color:#fff;letter-spacing:-0.391px;">r_pp_light_00001</span>
<svg class="b" style="left:137px;top:639.5px;" width="72" height="96" viewBox="0 0 72 96"><path d="M5 0 H44.6 L72 26.6 V91 a5 5 0 0 1 -5 5 H5 a5 5 0 0 1 -5 -5 V5 a5 5 0 0 1 5 -5 z" fill="#ecedf6"/><rect x="38.5" y="0" width="6" height="27" fill="url(#fsl)"/><rect x="44.5" y="27" width="27.5" height="5" fill="url(#fsb)"/><path d="M44.5 0 H45.5 L72 25.8 V27 H48.5 a4 4 0 0 1 -4 -4 z" fill="#f2f2fa"/><g transform="translate(0 0) scale(1)"><rect x="15.2" y="31" width="39" height="36" rx="4" fill="#ef5378" transform="rotate(-10 34.5 49.5)"/><path d="M20.7 36 H53.7 a4 4 0 0 1 4 4 V66.5 a4 4 0 0 1 -4 4 H22.7 a4 4 0 0 1 -4 -4 L16.8 40.1 a3.8 3.8 0 0 1 3.9 -4.1 z" fill="url(#fcard)"/><path d="M18.5 63 C23 60.5 27 61 32 63.6 C37 66 42 63 47 62 C51 61.3 54.5 62 57.7 63.5 V66.5 a4 4 0 0 1 -4 4 H22.7 a4 4 0 0 1 -4 -4 z" fill="#ec436c"/><circle cx="24.7" cy="41.3" r="1.1" fill="#f55f83"/><circle cx="51.6" cy="41" r="1.3" fill="#f55f83"/><circle cx="41" cy="62.3" r="1.2" fill="#f45c80"/><text x="38.1" y="57.2" font-family="Liberation Sans, sans-serif" font-weight="700" font-size="14.6" fill="#fff" text-anchor="middle" textLength="27.6" lengthAdjust="spacingAndGlyphs">FITS</text></g></svg>
<span class="t" style="left:130.25px;top:737.84px;font-size:12px;color:#fff;letter-spacing:-0.391px;">r_pp_light_00002</span>
<svg class="b" style="left:243px;top:639.5px;" width="72" height="96" viewBox="0 0 72 96"><path d="M5 0 H44.6 L72 26.6 V91 a5 5 0 0 1 -5 5 H5 a5 5 0 0 1 -5 -5 V5 a5 5 0 0 1 5 -5 z" fill="#ecedf6"/><rect x="38.5" y="0" width="6" height="27" fill="url(#fsl)"/><rect x="44.5" y="27" width="27.5" height="5" fill="url(#fsb)"/><path d="M44.5 0 H45.5 L72 25.8 V27 H48.5 a4 4 0 0 1 -4 -4 z" fill="#f2f2fa"/><g transform="translate(0 0) scale(1)"><rect x="15.2" y="31" width="39" height="36" rx="4" fill="#ef5378" transform="rotate(-10 34.5 49.5)"/><path d="M20.7 36 H53.7 a4 4 0 0 1 4 4 V66.5 a4 4 0 0 1 -4 4 H22.7 a4 4 0 0 1 -4 -4 L16.8 40.1 a3.8 3.8 0 0 1 3.9 -4.1 z" fill="url(#fcard)"/><path d="M18.5 63 C23 60.5 27 61 32 63.6 C37 66 42 63 47 62 C51 61.3 54.5 62 57.7 63.5 V66.5 a4 4 0 0 1 -4 4 H22.7 a4 4 0 0 1 -4 -4 z" fill="#ec436c"/><circle cx="24.7" cy="41.3" r="1.1" fill="#f55f83"/><circle cx="51.6" cy="41" r="1.3" fill="#f55f83"/><circle cx="41" cy="62.3" r="1.2" fill="#f45c80"/><text x="38.1" y="57.2" font-family="Liberation Sans, sans-serif" font-weight="700" font-size="14.6" fill="#fff" text-anchor="middle" textLength="27.6" lengthAdjust="spacingAndGlyphs">FITS</text></g></svg>
<span class="t" style="left:236.25px;top:737.84px;font-size:12px;color:#fff;letter-spacing:-0.391px;">r_pp_light_00003</span>
<svg class="b" style="left:349px;top:639.5px;" width="72" height="96" viewBox="0 0 72 96"><path d="M5 0 H44.6 L72 26.6 V91 a5 5 0 0 1 -5 5 H5 a5 5 0 0 1 -5 -5 V5 a5 5 0 0 1 5 -5 z" fill="#ecedf6"/><rect x="38.5" y="0" width="6" height="27" fill="url(#fsl)"/><rect x="44.5" y="27" width="27.5" height="5" fill="url(#fsb)"/><path d="M44.5 0 H45.5 L72 25.8 V27 H48.5 a4 4 0 0 1 -4 -4 z" fill="#f2f2fa"/><g transform="translate(0 0) scale(1)"><rect x="15.2" y="31" width="39" height="36" rx="4" fill="#ef5378" transform="rotate(-10 34.5 49.5)"/><path d="M20.7 36 H53.7 a4 4 0 0 1 4 4 V66.5 a4 4 0 0 1 -4 4 H22.7 a4 4 0 0 1 -4 -4 L16.8 40.1 a3.8 3.8 0 0 1 3.9 -4.1 z" fill="url(#fcard)"/><path d="M18.5 63 C23 60.5 27 61 32 63.6 C37 66 42 63 47 62 C51 61.3 54.5 62 57.7 63.5 V66.5 a4 4 0 0 1 -4 4 H22.7 a4 4 0 0 1 -4 -4 z" fill="#ec436c"/><circle cx="24.7" cy="41.3" r="1.1" fill="#f55f83"/><circle cx="51.6" cy="41" r="1.3" fill="#f55f83"/><circle cx="41" cy="62.3" r="1.2" fill="#f45c80"/><text x="38.1" y="57.2" font-family="Liberation Sans, sans-serif" font-weight="700" font-size="14.6" fill="#fff" text-anchor="middle" textLength="27.6" lengthAdjust="spacingAndGlyphs">FITS</text></g></svg>
<span class="t" style="left:342.25px;top:737.84px;font-size:12px;color:#fff;letter-spacing:-0.391px;">r_pp_light_00004</span>
<svg class="b" style="left:455px;top:639.5px;" width="72" height="96" viewBox="0 0 72 96"><path d="M5 0 H44.6 L72 26.6 V91 a5 5 0 0 1 -5 5 H5 a5 5 0 0 1 -5 -5 V5 a5 5 0 0 1 5 -5 z" fill="#ecedf6"/><rect x="38.5" y="0" width="6" height="27" fill="url(#fsl)"/><rect x="44.5" y="27" width="27.5" height="5" fill="url(#fsb)"/><path d="M44.5 0 H45.5 L72 25.8 V27 H48.5 a4 4 0 0 1 -4 -4 z" fill="#f2f2fa"/><g transform="translate(0 0) scale(1)"><rect x="15.2" y="31" width="39" height="36" rx="4" fill="#ef5378" transform="rotate(-10 34.5 49.5)"/><path d="M20.7 36 H53.7 a4 4 0 0 1 4 4 V66.5 a4 4 0 0 1 -4 4 H22.7 a4 4 0 0 1 -4 -4 L16.8 40.1 a3.8 3.8 0 0 1 3.9 -4.1 z" fill="url(#fcard)"/><path d="M18.5 63 C23 60.5 27 61 32 63.6 C37 66 42 63 47 62 C51 61.3 54.5 62 57.7 63.5 V66.5 a4 4 0 0 1 -4 4 H22.7 a4 4 0 0 1 -4 -4 z" fill="#ec436c"/><circle cx="24.7" cy="41.3" r="1.1" fill="#f55f83"/><circle cx="51.6" cy="41" r="1.3" fill="#f55f83"/><circle cx="41" cy="62.3" r="1.2" fill="#f45c80"/><text x="38.1" y="57.2" font-family="Liberation Sans, sans-serif" font-weight="700" font-size="14.6" fill="#fff" text-anchor="middle" textLength="27.6" lengthAdjust="spacingAndGlyphs">FITS</text></g></svg>
<span class="t" style="left:448.25px;top:737.84px;font-size:12px;color:#fff;letter-spacing:-0.391px;">r_pp_light_00005</span>
<svg class="b" style="left:561px;top:639.5px;" width="72" height="96" viewBox="0 0 72 96"><path d="M5 0 H44.6 L72 26.6 V91 a5 5 0 0 1 -5 5 H5 a5 5 0 0 1 -5 -5 V5 a5 5 0 0 1 5 -5 z" fill="#ecedf6"/><rect x="38.5" y="0" width="6" height="27" fill="url(#fsl)"/><rect x="44.5" y="27" width="27.5" height="5" fill="url(#fsb)"/><path d="M44.5 0 H45.5 L72 25.8 V27 H48.5 a4 4 0 0 1 -4 -4 z" fill="#f2f2fa"/><g transform="translate(0 0) scale(1)"><rect x="15.2" y="31" width="39" height="36" rx="4" fill="#ef5378" transform="rotate(-10 34.5 49.5)"/><path d="M20.7 36 H53.7 a4 4 0 0 1 4 4 V66.5 a4 4 0 0 1 -4 4 H22.7 a4 4 0 0 1 -4 -4 L16.8 40.1 a3.8 3.8 0 0 1 3.9 -4.1 z" fill="url(#fcard)"/><path d="M18.5 63 C23 60.5 27 61 32 63.6 C37 66 42 63 47 62 C51 61.3 54.5 62 57.7 63.5 V66.5 a4 4 0 0 1 -4 4 H22.7 a4 4 0 0 1 -4 -4 z" fill="#ec436c"/><circle cx="24.7" cy="41.3" r="1.1" fill="#f55f83"/><circle cx="51.6" cy="41" r="1.3" fill="#f55f83"/><circle cx="41" cy="62.3" r="1.2" fill="#f45c80"/><text x="38.1" y="57.2" font-family="Liberation Sans, sans-serif" font-weight="700" font-size="14.6" fill="#fff" text-anchor="middle" textLength="27.6" lengthAdjust="spacingAndGlyphs">FITS</text></g></svg>
<span class="t" style="left:554.25px;top:737.84px;font-size:12px;color:#fff;letter-spacing:-0.391px;">r_pp_light_00006</span>
<svg class="b" style="left:31px;top:756.5px;" width="72" height="96" viewBox="0 0 72 96"><path d="M5 0 H44.6 L72 26.6 V91 a5 5 0 0 1 -5 5 H5 a5 5 0 0 1 -5 -5 V5 a5 5 0 0 1 5 -5 z" fill="#ecedf6"/><rect x="38.5" y="0" width="6" height="27" fill="url(#fsl)"/><rect x="44.5" y="27" width="27.5" height="5" fill="url(#fsb)"/><path d="M44.5 0 H45.5 L72 25.8 V27 H48.5 a4 4 0 0 1 -4 -4 z" fill="#f2f2fa"/><g transform="translate(0 0) scale(1)"><rect x="15.2" y="31" width="39" height="36" rx="4" fill="#ef5378" transform="rotate(-10 34.5 49.5)"/><path d="M20.7 36 H53.7 a4 4 0 0 1 4 4 V66.5 a4 4 0 0 1 -4 4 H22.7 a4 4 0 0 1 -4 -4 L16.8 40.1 a3.8 3.8 0 0 1 3.9 -4.1 z" fill="url(#fcard)"/><path d="M18.5 63 C23 60.5 27 61 32 63.6 C37 66 42 63 47 62 C51 61.3 54.5 62 57.7 63.5 V66.5 a4 4 0 0 1 -4 4 H22.7 a4 4 0 0 1 -4 -4 z" fill="#ec436c"/><circle cx="24.7" cy="41.3" r="1.1" fill="#f55f83"/><circle cx="51.6" cy="41" r="1.3" fill="#f55f83"/><circle cx="41" cy="62.3" r="1.2" fill="#f45c80"/><text x="38.1" y="57.2" font-family="Liberation Sans, sans-serif" font-weight="700" font-size="14.6" fill="#fff" text-anchor="middle" textLength="27.6" lengthAdjust="spacingAndGlyphs">FITS</text></g></svg>
<span class="t" style="left:24.25px;top:854.84px;font-size:12px;color:#fff;letter-spacing:-0.391px;">r_pp_light_00007</span>
<svg class="b" style="left:137px;top:756.5px;" width="72" height="96" viewBox="0 0 72 96"><path d="M5 0 H44.6 L72 26.6 V91 a5 5 0 0 1 -5 5 H5 a5 5 0 0 1 -5 -5 V5 a5 5 0 0 1 5 -5 z" fill="#ecedf6"/><rect x="38.5" y="0" width="6" height="27" fill="url(#fsl)"/><rect x="44.5" y="27" width="27.5" height="5" fill="url(#fsb)"/><path d="M44.5 0 H45.5 L72 25.8 V27 H48.5 a4 4 0 0 1 -4 -4 z" fill="#f2f2fa"/><g transform="translate(0 0) scale(1)"><rect x="15.2" y="31" width="39" height="36" rx="4" fill="#ef5378" transform="rotate(-10 34.5 49.5)"/><path d="M20.7 36 H53.7 a4 4 0 0 1 4 4 V66.5 a4 4 0 0 1 -4 4 H22.7 a4 4 0 0 1 -4 -4 L16.8 40.1 a3.8 3.8 0 0 1 3.9 -4.1 z" fill="url(#fcard)"/><path d="M18.5 63 C23 60.5 27 61 32 63.6 C37 66 42 63 47 62 C51 61.3 54.5 62 57.7 63.5 V66.5 a4 4 0 0 1 -4 4 H22.7 a4 4 0 0 1 -4 -4 z" fill="#ec436c"/><circle cx="24.7" cy="41.3" r="1.1" fill="#f55f83"/><circle cx="51.6" cy="41" r="1.3" fill="#f55f83"/><circle cx="41" cy="62.3" r="1.2" fill="#f45c80"/><text x="38.1" y="57.2" font-family="Liberation Sans, sans-serif" font-weight="700" font-size="14.6" fill="#fff" text-anchor="middle" textLength="27.6" lengthAdjust="spacingAndGlyphs">FITS</text></g></svg>
<span class="t" style="left:130.25px;top:854.84px;font-size:12px;color:#fff;letter-spacing:-0.391px;">r_pp_light_00008</span>
<svg class="b" style="left:243px;top:756.5px;" width="72" height="96" viewBox="0 0 72 96"><path d="M5 0 H44.6 L72 26.6 V91 a5 5 0 0 1 -5 5 H5 a5 5 0 0 1 -5 -5 V5 a5 5 0 0 1 5 -5 z" fill="#ecedf6"/><rect x="38.5" y="0" width="6" height="27" fill="url(#fsl)"/><rect x="44.5" y="27" width="27.5" height="5" fill="url(#fsb)"/><path d="M44.5 0 H45.5 L72 25.8 V27 H48.5 a4 4 0 0 1 -4 -4 z" fill="#f2f2fa"/><g transform="translate(0 0) scale(1)"><rect x="15.2" y="31" width="39" height="36" rx="4" fill="#ef5378" transform="rotate(-10 34.5 49.5)"/><path d="M20.7 36 H53.7 a4 4 0 0 1 4 4 V66.5 a4 4 0 0 1 -4 4 H22.7 a4 4 0 0 1 -4 -4 L16.8 40.1 a3.8 3.8 0 0 1 3.9 -4.1 z" fill="url(#fcard)"/><path d="M18.5 63 C23 60.5 27 61 32 63.6 C37 66 42 63 47 62 C51 61.3 54.5 62 57.7 63.5 V66.5 a4 4 0 0 1 -4 4 H22.7 a4 4 0 0 1 -4 -4 z" fill="#ec436c"/><circle cx="24.7" cy="41.3" r="1.1" fill="#f55f83"/><circle cx="51.6" cy="41" r="1.3" fill="#f55f83"/><circle cx="41" cy="62.3" r="1.2" fill="#f45c80"/><text x="38.1" y="57.2" font-family="Liberation Sans, sans-serif" font-weight="700" font-size="14.6" fill="#fff" text-anchor="middle" textLength="27.6" lengthAdjust="spacingAndGlyphs">FITS</text></g></svg>
<span class="t" style="left:236.25px;top:854.84px;font-size:12px;color:#fff;letter-spacing:-0.391px;">r_pp_light_00009</span>
<svg class="b" style="left:349px;top:756.5px;" width="72" height="96" viewBox="0 0 72 96"><path d="M5 0 H44.6 L72 26.6 V91 a5 5 0 0 1 -5 5 H5 a5 5 0 0 1 -5 -5 V5 a5 5 0 0 1 5 -5 z" fill="#ecedf6"/><rect x="38.5" y="0" width="6" height="27" fill="url(#fsl)"/><rect x="44.5" y="27" width="27.5" height="5" fill="url(#fsb)"/><path d="M44.5 0 H45.5 L72 25.8 V27 H48.5 a4 4 0 0 1 -4 -4 z" fill="#f2f2fa"/><g transform="translate(0 0) scale(1)"><rect x="15.2" y="31" width="39" height="36" rx="4" fill="#ef5378" transform="rotate(-10 34.5 49.5)"/><path d="M20.7 36 H53.7 a4 4 0 0 1 4 4 V66.5 a4 4 0 0 1 -4 4 H22.7 a4 4 0 0 1 -4 -4 L16.8 40.1 a3.8 3.8 0 0 1 3.9 -4.1 z" fill="url(#fcard)"/><path d="M18.5 63 C23 60.5 27 61 32 63.6 C37 66 42 63 47 62 C51 61.3 54.5 62 57.7 63.5 V66.5 a4 4 0 0 1 -4 4 H22.7 a4 4 0 0 1 -4 -4 z" fill="#ec436c"/><circle cx="24.7" cy="41.3" r="1.1" fill="#f55f83"/><circle cx="51.6" cy="41" r="1.3" fill="#f55f83"/><circle cx="41" cy="62.3" r="1.2" fill="#f45c80"/><text x="38.1" y="57.2" font-family="Liberation Sans, sans-serif" font-weight="700" font-size="14.6" fill="#fff" text-anchor="middle" textLength="27.6" lengthAdjust="spacingAndGlyphs">FITS</text></g></svg>
<span class="t" style="left:342.25px;top:854.84px;font-size:12px;color:#fff;letter-spacing:-0.391px;">r_pp_light_00010</span>
<svg class="b" style="left:455px;top:756.5px;" width="72" height="96" viewBox="0 0 72 96"><path d="M5 0 H44.6 L72 26.6 V91 a5 5 0 0 1 -5 5 H5 a5 5 0 0 1 -5 -5 V5 a5 5 0 0 1 5 -5 z" fill="#ecedf6"/><rect x="38.5" y="0" width="6" height="27" fill="url(#fsl)"/><rect x="44.5" y="27" width="27.5" height="5" fill="url(#fsb)"/><path d="M44.5 0 H45.5 L72 25.8 V27 H48.5 a4 4 0 0 1 -4 -4 z" fill="#f2f2fa"/><g transform="translate(0 0) scale(1)"><rect x="15.2" y="31" width="39" height="36" rx="4" fill="#ef5378" transform="rotate(-10 34.5 49.5)"/><path d="M20.7 36 H53.7 a4 4 0 0 1 4 4 V66.5 a4 4 0 0 1 -4 4 H22.7 a4 4 0 0 1 -4 -4 L16.8 40.1 a3.8 3.8 0 0 1 3.9 -4.1 z" fill="url(#fcard)"/><path d="M18.5 63 C23 60.5 27 61 32 63.6 C37 66 42 63 47 62 C51 61.3 54.5 62 57.7 63.5 V66.5 a4 4 0 0 1 -4 4 H22.7 a4 4 0 0 1 -4 -4 z" fill="#ec436c"/><circle cx="24.7" cy="41.3" r="1.1" fill="#f55f83"/><circle cx="51.6" cy="41" r="1.3" fill="#f55f83"/><circle cx="41" cy="62.3" r="1.2" fill="#f45c80"/><text x="38.1" y="57.2" font-family="Liberation Sans, sans-serif" font-weight="700" font-size="14.6" fill="#fff" text-anchor="middle" textLength="27.6" lengthAdjust="spacingAndGlyphs">FITS</text></g></svg>
<span class="t" style="left:448.25px;top:854.84px;font-size:12px;color:#fff;letter-spacing:-0.335px;">r_pp_light_00011</span>
<svg class="b" style="left:561px;top:756.5px;" width="72" height="96" viewBox="0 0 72 96"><path d="M5 0 H44.6 L72 26.6 V91 a5 5 0 0 1 -5 5 H5 a5 5 0 0 1 -5 -5 V5 a5 5 0 0 1 5 -5 z" fill="#ecedf6"/><rect x="38.5" y="0" width="6" height="27" fill="url(#fsl)"/><rect x="44.5" y="27" width="27.5" height="5" fill="url(#fsb)"/><path d="M44.5 0 H45.5 L72 25.8 V27 H48.5 a4 4 0 0 1 -4 -4 z" fill="#f2f2fa"/><g transform="translate(0 0) scale(1)"><rect x="15.2" y="31" width="39" height="36" rx="4" fill="#ef5378" transform="rotate(-10 34.5 49.5)"/><path d="M20.7 36 H53.7 a4 4 0 0 1 4 4 V66.5 a4 4 0 0 1 -4 4 H22.7 a4 4 0 0 1 -4 -4 L16.8 40.1 a3.8 3.8 0 0 1 3.9 -4.1 z" fill="url(#fcard)"/><path d="M18.5 63 C23 60.5 27 61 32 63.6 C37 66 42 63 47 62 C51 61.3 54.5 62 57.7 63.5 V66.5 a4 4 0 0 1 -4 4 H22.7 a4 4 0 0 1 -4 -4 z" fill="#ec436c"/><circle cx="24.7" cy="41.3" r="1.1" fill="#f55f83"/><circle cx="51.6" cy="41" r="1.3" fill="#f55f83"/><circle cx="41" cy="62.3" r="1.2" fill="#f45c80"/><text x="38.1" y="57.2" font-family="Liberation Sans, sans-serif" font-weight="700" font-size="14.6" fill="#fff" text-anchor="middle" textLength="27.6" lengthAdjust="spacingAndGlyphs">FITS</text></g></svg>
<span class="t" style="left:554.25px;top:854.84px;font-size:12px;color:#fff;letter-spacing:-0.391px;">r_pp_light_00012</span>
</div>
<div class="b" style="left:1781.7px;top:748px;width:2px;height:187px;background:#9a9a9a;border-radius:1px;"></div>
<div class="b" style="left:1763px;top:1005px;width:24px;height:3px;background:#7d7d7d;"></div>
<div class="b" style="left:231.5px;top:188px;width:101px;height:101.5px;background:#ffffff;box-sizing:border-box;border:1px solid #3a3a3a;border-radius:5px;"></div>
<div class="b" style="left:271px;top:230.5px;width:22px;height:15px;background:#0b78d4;"></div>
<span class="t" style="left:275.25px;top:233.14px;font-size:12px;color:#fff;letter-spacing:0.076px;font-weight:700;">21</span>
<div class="b" style="left:245px;top:203px;width:156px;height:21px;background:#fbfbfb;box-sizing:border-box;border:1px solid #dedede;border-radius:3px;"></div>
<svg class="b" style="left:248px;top:207px;" width="14" height="13" viewBox="0 0 14 13"><path d="M1.5 6.5 H11.5 M7.8 2.5 L11.8 6.5 L7.8 10.5" fill="none" stroke="#3a3a3a" stroke-width="1.2" stroke-linecap="round" stroke-linejoin="round"/></svg>
<span class="t" style="left:265.00px;top:207.84px;font-size:12px;color:#2a3596;letter-spacing:-0.069px;">Nach Arbeit verschieben</span>
<svg class="b" style="left:0px;top:0px;pointer-events:none;" width="1792" height="1008" viewBox="0 0 1792 1008"><path d="M258.9 172.2 L277.9 180.1 L296.9 188.0 L316.0 195.8 L335.0 203.7 L354.2 211.4 L373.3 219.0 L392.4 226.7 L411.5 234.4 L430.6 242.1 L449.7 249.8 L468.8 257.5 L488.3 265.2 L507.8 272.9 L527.3 280.6 L546.7 288.3 L566.2 296.0 L585.7 303.7 L605.2 311.4 L624.6 319.1 L644.1 326.8 L663.6 334.5 L683.1 342.2 L702.5 349.9 L722.0 357.6 L741.5 365.3 L760.9 373.0 L780.4 380.7 L799.9 388.4 L819.4 396.1 L838.8 403.8 L858.8 411.8 L878.8 419.8 L898.8 427.9 L918.8 435.9 L938.8 443.9 L958.8 451.9 L978.8 459.9 L998.8 467.9 L1018.8 475.9 L1038.3 483.6 L1057.7 491.4 L1077.1 499.2 L1096.5 507.0 L1115.9 514.8 L1135.3 522.5 L1154.7 530.3 L1174.1 538.1 L1193.5 545.8 L1212.9 553.6 L1232.3 561.3 L1251.8 569.0 L1271.2 576.7 L1290.6 584.5 L1310.5 591.0 L1311.5 588.6 L1292.6 579.6 L1273.2 571.7 L1253.8 563.9 L1234.5 556.0 L1215.1 548.2 L1195.7 540.3 L1176.3 532.5 L1156.9 524.7 L1137.5 516.9 L1118.1 509.1 L1098.7 501.3 L1079.3 493.5 L1059.9 485.7 L1040.5 477.9 L1021.2 470.1 L1001.2 462.1 L981.2 454.1 L961.2 446.1 L941.2 438.0 L921.2 430.0 L901.2 422.0 L881.2 414.0 L861.2 406.0 L841.2 398.0 L821.7 390.3 L802.2 382.6 L782.7 374.9 L763.3 367.2 L743.8 359.5 L724.3 351.8 L704.8 344.1 L685.4 336.4 L665.9 328.7 L646.4 321.0 L626.9 313.3 L607.5 305.6 L588.0 297.9 L568.5 290.2 L549.1 282.5 L529.6 274.8 L510.1 267.1 L490.6 259.4 L471.2 251.7 L452.0 244.1 L432.8 236.5 L413.7 228.9 L394.5 221.4 L375.4 213.8 L356.2 206.2 L337.0 198.6 L317.8 191.2 L298.6 183.8 L279.4 176.4 L260.1 169.0 z" fill="#da1d3c"/><path d="M258.3 167.6 L281.4 160.4 L282.2 162.2 L260.6 172.4 z" fill="#da1d3c" stroke="#da1d3c" stroke-width="0.8" stroke-linejoin="round"/><path d="M257.3 170.6 L261.6 168.6 L271.9 189.7 L268.2 191.8 z" fill="#da1d3c" stroke="#da1d3c" stroke-width="0.8" stroke-linejoin="round"/></svg>
</body></html>
